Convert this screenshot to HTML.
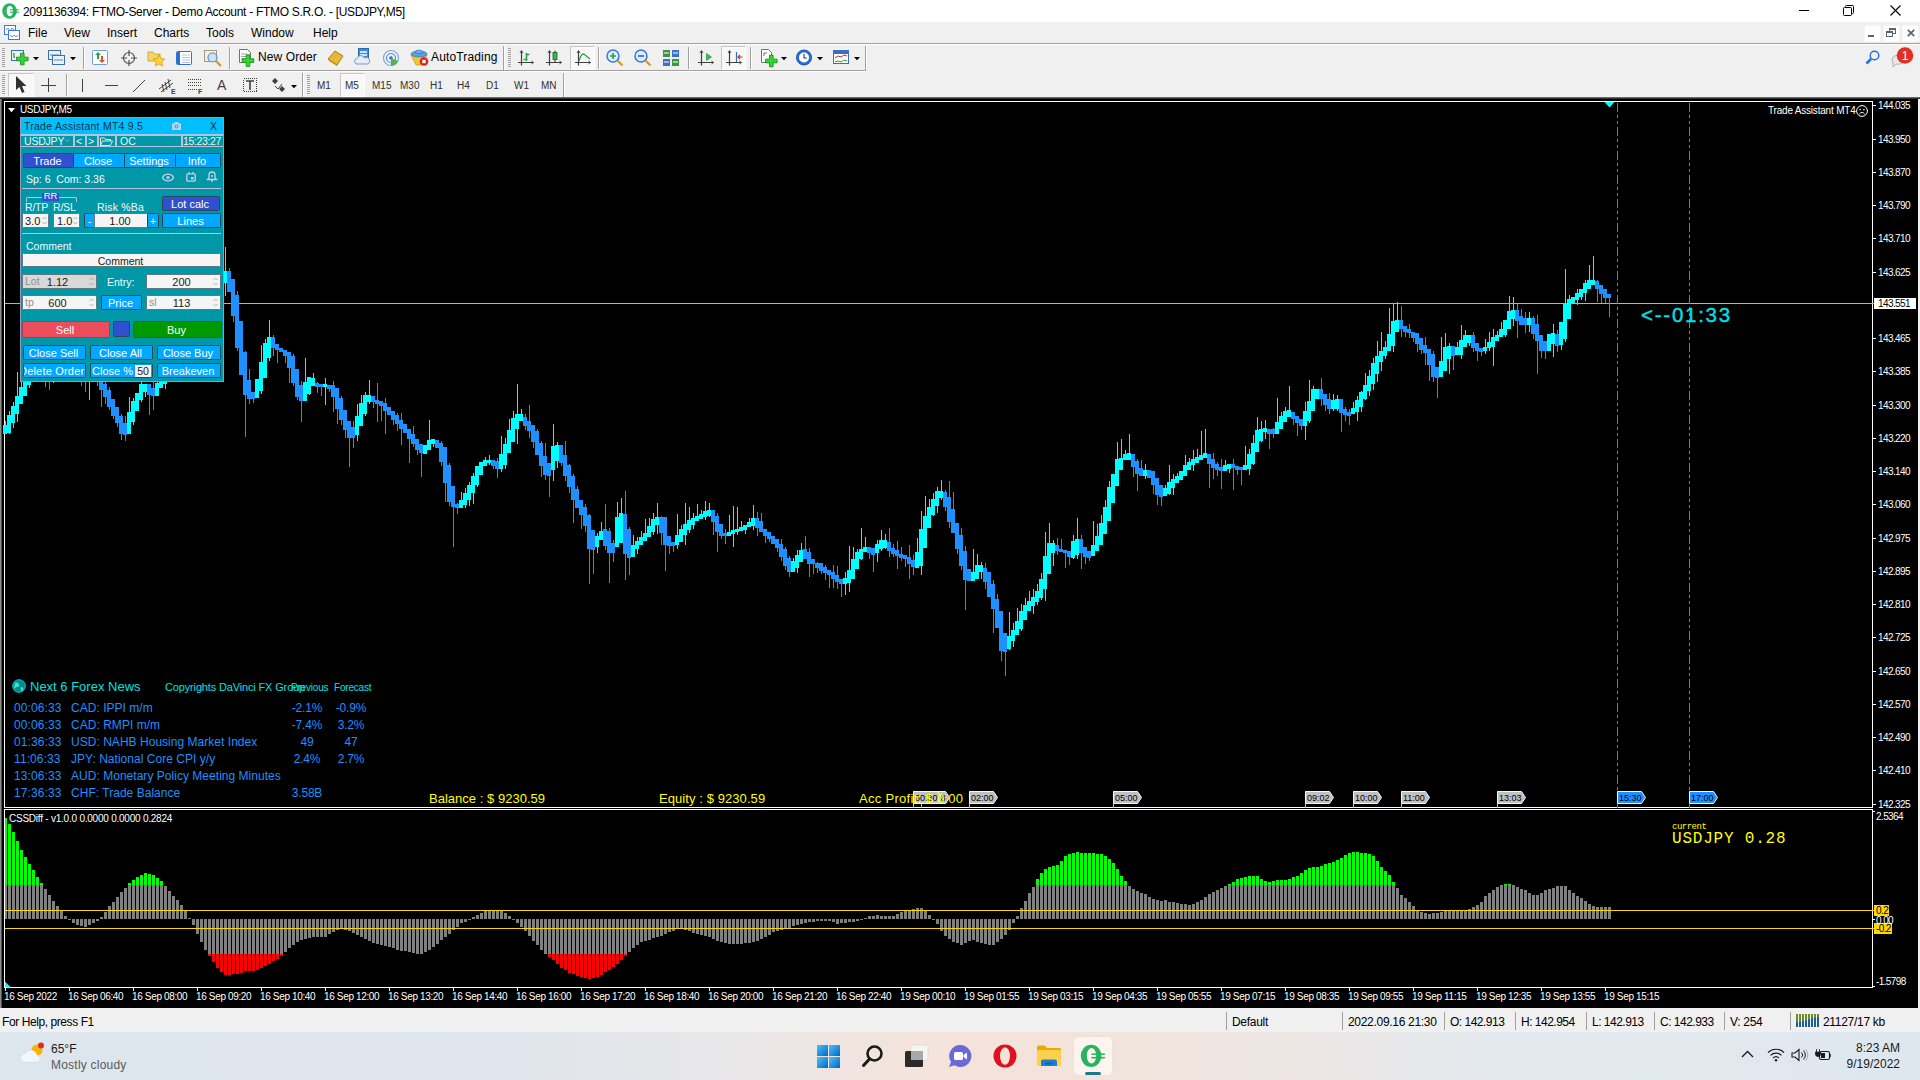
<!DOCTYPE html>
<html><head><meta charset="utf-8"><title>MT4</title><style>
*{margin:0;padding:0;box-sizing:border-box}
html,body{width:1920px;height:1080px;overflow:hidden;background:#f0f0f0;font-family:"Liberation Sans",sans-serif;}
.a{position:absolute}
.t{position:absolute;white-space:nowrap;line-height:1}
svg{position:absolute;overflow:visible}
</style></head>
<body>
<div class="a" style="left:0;top:0;width:1920px;height:22px;background:#fff"></div>
<svg style="left:2px;top:3px" width="18" height="18" viewBox="0 0 18 18"><ellipse cx="7.500" cy="8" rx="7.300" ry="7.800" fill="#27b35f"/><ellipse cx="7.800" cy="8" rx="3.200" ry="5.300" fill="#fff"/><rect x="7.800" y="6.300" width="9" height="1.100" fill="#27b35f"/><rect x="7.800" y="8.700" width="9" height="1.100" fill="#27b35f"/></svg>
<div class="t" style="left:23px;top:6px;font-size:12px;color:#000;letter-spacing:-0.3px">2091136394: FTMO-Server - Demo Account - FTMO S.R.O. - [USDJPY,M5]</div>
<div class="a" style="left:1799px;top:10px;width:10px;height:1px;background:#000"></div>
<svg style="left:1843px;top:5px" width="11" height="11"><rect x="0.5" y="2.5" width="8" height="8" fill="none" stroke="#000" rx="1"/><path d="M2.5 2.5v-1a1 1 0 0 1 1-1h6a1 1 0 0 1 1 1v6a1 1 0 0 1-1 1h-1" fill="none" stroke="#000"/></svg>
<svg style="left:1890px;top:5px" width="11" height="11"><path d="M0.5 0.5l10 10M10.5 0.5l-10 10" stroke="#000" stroke-width="1.1"/></svg>
<div class="a" style="left:0;top:22px;width:1920px;height:21px;background:#f0f0f0"></div>
<svg style="left:4px;top:24px" width="17" height="17" viewBox="0 0 17 17"><rect x="0.5" y="1.5" width="11" height="9" fill="#fff" stroke="#3a7bd5"/><rect x="4.5" y="6.5" width="11" height="9" fill="#fff" stroke="#3a7bd5"/><path d="M2 6l2-2 2 3 2-3 2 2" stroke="#3a7bd5" fill="none" stroke-width="0.8"/><path d="M6 11l2 2 2-2 2 2 2-2" stroke="#3a7bd5" fill="none" stroke-width="0.8"/></svg>
<div class="t" style="left:28px;top:27px;font-size:12px;color:#000;">File</div>
<div class="t" style="left:64px;top:27px;font-size:12px;color:#000;">View</div>
<div class="t" style="left:107px;top:27px;font-size:12px;color:#000;">Insert</div>
<div class="t" style="left:154px;top:27px;font-size:12px;color:#000;">Charts</div>
<div class="t" style="left:206px;top:27px;font-size:12px;color:#000;">Tools</div>
<div class="t" style="left:251px;top:27px;font-size:12px;color:#000;">Window</div>
<div class="t" style="left:313px;top:27px;font-size:12px;color:#000;">Help</div>
<div class="a" style="left:1864px;top:25px;width:17px;height:17px;background:#fff;border:1px solid #f4f4f4"></div>
<div class="a" style="left:1883px;top:25px;width:17px;height:17px;background:#fff;border:1px solid #f4f4f4"></div>
<div class="a" style="left:1902px;top:25px;width:17px;height:17px;background:#fff;border:1px solid #f4f4f4"></div>
<div class="a" style="left:1868px;top:35px;width:6px;height:2px;background:#5a6478"></div>
<svg style="left:1886px;top:28px" width="10" height="9"><rect x="3.5" y="0.5" width="6" height="5" fill="none" stroke="#5a6478"/><rect x="3" y="0" width="7" height="2" fill="#5a6478"/><rect x="0.5" y="3.5" width="6" height="5" fill="#fafafa" stroke="#5a6478"/><rect x="0" y="3" width="7" height="2" fill="#5a6478"/></svg>
<svg style="left:1907px;top:29px" width="8" height="8"><path d="M0.8 0.8l6.4 6.4M7.2 0.8l-6.4 6.4" stroke="#5a6478" stroke-width="1.8"/></svg>
<div class="a" style="left:0;top:43px;width:1920px;height:1px;background:#a0a0a0"></div>
<div class="a" style="left:0;top:44px;width:1920px;height:1px;background:#fff"></div>
<div class="a" style="left:0;top:70px;width:866px;height:1px;background:#a0a0a0"></div>
<div class="a" style="left:0;top:71px;width:866px;height:1px;background:#fff"></div>
<div class="a" style="left:2px;top:48px;width:3px;height:1px;background:#a0a0a0"></div><div class="a" style="left:2px;top:50px;width:3px;height:1px;background:#a0a0a0"></div><div class="a" style="left:2px;top:52px;width:3px;height:1px;background:#a0a0a0"></div><div class="a" style="left:2px;top:54px;width:3px;height:1px;background:#a0a0a0"></div><div class="a" style="left:2px;top:56px;width:3px;height:1px;background:#a0a0a0"></div><div class="a" style="left:2px;top:58px;width:3px;height:1px;background:#a0a0a0"></div><div class="a" style="left:2px;top:60px;width:3px;height:1px;background:#a0a0a0"></div><div class="a" style="left:2px;top:62px;width:3px;height:1px;background:#a0a0a0"></div><div class="a" style="left:2px;top:64px;width:3px;height:1px;background:#a0a0a0"></div><div class="a" style="left:2px;top:66px;width:3px;height:1px;background:#a0a0a0"></div>
<div class="a" style="left:2px;top:75px;width:3px;height:1px;background:#a0a0a0"></div><div class="a" style="left:2px;top:77px;width:3px;height:1px;background:#a0a0a0"></div><div class="a" style="left:2px;top:79px;width:3px;height:1px;background:#a0a0a0"></div><div class="a" style="left:2px;top:81px;width:3px;height:1px;background:#a0a0a0"></div><div class="a" style="left:2px;top:83px;width:3px;height:1px;background:#a0a0a0"></div><div class="a" style="left:2px;top:85px;width:3px;height:1px;background:#a0a0a0"></div><div class="a" style="left:2px;top:87px;width:3px;height:1px;background:#a0a0a0"></div><div class="a" style="left:2px;top:89px;width:3px;height:1px;background:#a0a0a0"></div><div class="a" style="left:2px;top:91px;width:3px;height:1px;background:#a0a0a0"></div><div class="a" style="left:2px;top:93px;width:3px;height:1px;background:#a0a0a0"></div>
<svg style="left:11px;top:48px" width="20" height="20" viewBox="0 0 20 20"><rect x="0.5" y="2.5" width="12" height="10" fill="#eaf2fb" stroke="#3a6fb5"/><path d="M3 5v5M2 6h1M3 9h1" stroke="#2e7d32" fill="none"/><path d="M5.500 9.200h4v-4h3.600v4h4v3.600h-4v4h-3.600v-4h-4z" fill="#33d633" stroke="#0f8a0f" stroke-width="0.8"/></svg>
<svg style="left:32.5px;top:56.5px" width="6" height="4"><path d="M0 0h6l-3 3.300z" fill="#000"/></svg>
<svg style="left:48px;top:48px" width="20" height="20" viewBox="0 0 20 20"><rect x="0.5" y="2.5" width="12" height="9" fill="#eaf2fb" stroke="#3a6fb5"/><rect x="4.5" y="7.5" width="12" height="9" fill="#eaf2fb" stroke="#3a6fb5"/><path d="M2 7h9M6 12h9" stroke="#3a6fb5" stroke-width="0.8"/></svg>
<svg style="left:69.5px;top:56.5px" width="6" height="4"><path d="M0 0h6l-3 3.300z" fill="#000"/></svg>
<div class="a" style="left:83px;top:47px;width:1px;height:22px;background:#a0a0a0"></div><div class="a" style="left:84px;top:47px;width:1px;height:22px;background:#fff"></div>
<svg style="left:91px;top:48px" width="20" height="20" viewBox="0 0 20 20"><rect x="1.5" y="2.5" width="15" height="14" fill="#fff" stroke="#6aa0e0" rx="1"/><path d="M6 11v-4h-2l3-3 3 3h-2v4z" fill="#2ea043"/><path d="M10 8v4h-2l3 3 3-3h-2v-4z" fill="#e05020"/></svg>
<svg style="left:120px;top:48px" width="20" height="20" viewBox="0 0 20 20"><circle cx="9" cy="10" r="5.5" fill="none" stroke="#505050" stroke-width="1.2"/><path d="M9 2v6M9 12v6M1 10h6M11 10h6" stroke="#505050" stroke-width="1.2"/></svg>
<svg style="left:147px;top:48px" width="20" height="20" viewBox="0 0 20 20"><path d="M1 4h5l1 2h6v7h-12z" fill="#f2d56b" stroke="#c8a020" stroke-width="0.8"/><path d="M12 8l1.8 3.6 4 .5-3 2.8.8 4-3.6-2-3.6 2 .8-4-3-2.8 4-.5z" fill="#ffd633" stroke="#d09a10" stroke-width="0.8" transform="translate(0,-1)"/></svg>
<svg style="left:175px;top:48px" width="20" height="20" viewBox="0 0 20 20"><rect x="1.5" y="3.5" width="15" height="13" fill="#fff" stroke="#2f6fd0" rx="1"/><rect x="2" y="4" width="3" height="12" fill="#2f6fd0"/><path d="M7 7h8M7 9.5h8M7 12h8M7 14.500h8" stroke="#9db8e0" stroke-width="0.8"/></svg>
<svg style="left:203px;top:48px" width="20" height="20" viewBox="0 0 20 20"><rect x="1.500" y="2.500" width="12" height="11" fill="#f4f0e4" stroke="#a09880"/><circle cx="9.500" cy="9.500" r="4.500" fill="#cfe3f8" stroke="#5c8fd0" stroke-width="1.200"/><path d="M13 13l5 5" stroke="#c89a30" stroke-width="2.200"/></svg>
<div class="a" style="left:229px;top:47px;width:1px;height:22px;background:#a0a0a0"></div><div class="a" style="left:230px;top:47px;width:1px;height:22px;background:#fff"></div>
<svg style="left:238px;top:48px" width="20" height="20" viewBox="0 0 20 20"><path d="M1.500 1.500h8l3 3v10h-11z" fill="#fff" stroke="#707070"/><path d="M3 6h6M3 8.500h6M3 11h4" stroke="#909090" stroke-width="0.8"/><path d="M4.200 10.800h4v-4h3.600v4h4v3.600h-4v4h-3.600v-4h-4z" fill="#33d633" stroke="#0f8a0f" stroke-width="0.8"/></svg>
<div class="t" style="left:258px;top:51px;font-size:12px;color:#000;letter-spacing:0.1px">New Order</div>
<svg style="left:326px;top:48px" width="20" height="20" viewBox="0 0 20 20"><path d="M2 11l7-8 8 5-6 9z" fill="#e8b838" stroke="#b07a10"/><path d="M2 11l1 2 8 5 0-1z" fill="#c89020"/></svg>
<svg style="left:353px;top:48px" width="20" height="20" viewBox="0 0 20 20"><rect x="5.500" y="0.500" width="10" height="10" fill="#3b8be0" stroke="#2a68b0"/><rect x="7" y="3" width="7" height="2" fill="#cfe3f8"/><rect x="7" y="6" width="7" height="2" fill="#cfe3f8"/><path d="M3 16a3 3 0 0 1 1-5.500 4 4 0 0 1 7.500-.5 3 3 0 0 1 3.500 6z" fill="#e8eef8" stroke="#7a98c0"/></svg>
<svg style="left:382px;top:48px" width="20" height="20" viewBox="0 0 20 20"><circle cx="9" cy="10" r="7.500" fill="none" stroke="#7aa8e0" stroke-width="1.200"/><circle cx="9" cy="10" r="4.500" fill="none" stroke="#5a90d8" stroke-width="1.200"/><circle cx="9" cy="10" r="1.800" fill="#3070c0"/><path d="M9 10v8a8 8 0 0 0 7-5z" fill="#4cb84c"/></svg>
<svg style="left:410px;top:48px" width="20" height="20" viewBox="0 0 20 20"><path d="M1 7h16l-5 10h-6z" fill="#f0c830" stroke="#c89a20" stroke-width="0.8"/><ellipse cx="9" cy="6" rx="8" ry="3" fill="#5aa0e0" stroke="#3a78c0" stroke-width="0.8"/><path d="M5 5a4 3 0 0 1 8 0z" fill="#7ab8f0" stroke="#3a78c0" stroke-width="0.8"/><circle cx="14" cy="13.500" r="4.300" fill="#e02020"/><rect x="12.300" y="11.800" width="3.400" height="3.400" fill="#fff"/></svg>
<div class="t" style="left:431px;top:51px;font-size:12px;color:#000;letter-spacing:0.15px">AutoTrading</div>
<div class="a" style="left:503px;top:46px;width:1px;height:24px;background:#a0a0a0"></div><div class="a" style="left:504px;top:46px;width:1px;height:24px;background:#fff"></div>
<div class="a" style="left:508px;top:48px;width:3px;height:1px;background:#a0a0a0"></div><div class="a" style="left:508px;top:50px;width:3px;height:1px;background:#a0a0a0"></div><div class="a" style="left:508px;top:52px;width:3px;height:1px;background:#a0a0a0"></div><div class="a" style="left:508px;top:54px;width:3px;height:1px;background:#a0a0a0"></div><div class="a" style="left:508px;top:56px;width:3px;height:1px;background:#a0a0a0"></div><div class="a" style="left:508px;top:58px;width:3px;height:1px;background:#a0a0a0"></div><div class="a" style="left:508px;top:60px;width:3px;height:1px;background:#a0a0a0"></div><div class="a" style="left:508px;top:62px;width:3px;height:1px;background:#a0a0a0"></div><div class="a" style="left:508px;top:64px;width:3px;height:1px;background:#a0a0a0"></div><div class="a" style="left:508px;top:66px;width:3px;height:1px;background:#a0a0a0"></div>
<svg style="left:517px;top:48px" width="20" height="20" viewBox="0 0 20 20"><path d="M4.500 3v14.500M1 14.500h15.500" stroke="#404040" stroke-width="1.200" fill="none"/><path d="M3 5l1.500-2.500 1.500 2.500M14.500 13l2 1.500-2 1.500" stroke="#404040" stroke-width="0.9" fill="none"/><path d="M9.500 5v8M9.500 6.500h3M6.500 11.500h3" stroke="#2ea043" stroke-width="1.600" fill="none"/></svg>
<svg style="left:545px;top:48px" width="20" height="20" viewBox="0 0 20 20"><path d="M4.500 3v14.500M1 14.500h15.500" stroke="#404040" stroke-width="1.200" fill="none"/><path d="M3 5l1.500-2.500 1.500 2.500M14.500 13l2 1.500-2 1.500" stroke="#404040" stroke-width="0.9" fill="none"/><path d="M10 2.500v11.500" stroke="#303030"/><rect x="8" y="4.500" width="4" height="7" fill="#2ec04a" stroke="#205a20" stroke-width="0.8"/></svg>
<div class="a" style="left:570px;top:46px;width:25px;height:24px;background:#f8f8f8;border:1px solid #c8c8c8;border-right-color:#fff;border-bottom-color:#fff"></div>
<svg style="left:574px;top:48px" width="20" height="20" viewBox="0 0 20 20"><path d="M4.500 3v14.500M1 14.500h15.500" stroke="#404040" stroke-width="1.200" fill="none"/><path d="M3 5l1.500-2.500 1.500 2.500M14.500 13l2 1.500-2 1.500" stroke="#404040" stroke-width="0.9" fill="none"/><path d="M5 13q2.500-9 5.500-6.500t5.500 4.500" stroke="#2ea043" fill="none" stroke-width="1.300"/></svg>
<div class="a" style="left:598px;top:47px;width:1px;height:22px;background:#a0a0a0"></div><div class="a" style="left:599px;top:47px;width:1px;height:22px;background:#fff"></div>
<svg style="left:605px;top:48px" width="20" height="20" viewBox="0 0 20 20"><circle cx="8" cy="8" r="6" fill="#d8ecff" stroke="#3a78d0" stroke-width="1.500"/><path d="M5 8h6M8 5v6" stroke="#2ea043" stroke-width="1.600"/><path d="M12.500 12.500l5 5" stroke="#d0a030" stroke-width="2.400"/></svg>
<svg style="left:633px;top:48px" width="20" height="20" viewBox="0 0 20 20"><circle cx="8" cy="8" r="6" fill="#d8ecff" stroke="#3a78d0" stroke-width="1.500"/><path d="M5 8h6" stroke="#3060c0" stroke-width="1.600"/><path d="M12.500 12.500l5 5" stroke="#d0a030" stroke-width="2.400"/></svg>
<svg style="left:662px;top:48px" width="20" height="20" viewBox="0 0 20 20"><rect x="1" y="2" width="7" height="7" fill="#3a9a3a"/><rect x="10" y="2" width="7" height="7" fill="#3a70d0"/><rect x="1" y="11" width="7" height="7" fill="#3a70d0"/><rect x="10" y="11" width="7" height="7" fill="#3a9a3a"/><path d="M2 5h5M11 5h5M2 14h5M11 14h5" stroke="#fff" stroke-width="1"/></svg>
<div class="a" style="left:688px;top:47px;width:1px;height:22px;background:#a0a0a0"></div><div class="a" style="left:689px;top:47px;width:1px;height:22px;background:#fff"></div>
<svg style="left:697px;top:48px" width="20" height="20" viewBox="0 0 20 20"><path d="M4.500 3v14.500M1 14.500h15.500" stroke="#404040" stroke-width="1.200" fill="none"/><path d="M3 5l1.500-2.500 1.500 2.500M14.500 13l2 1.500-2 1.500" stroke="#404040" stroke-width="0.9" fill="none"/><path d="M9.500 5.500l5 3.500-5 3.500z" fill="#2ec04a" stroke="#208a30" stroke-width="0.6"/></svg>
<div class="a" style="left:721px;top:46px;width:25px;height:24px;background:#f8f8f8;border:1px solid #c8c8c8;border-right-color:#fff;border-bottom-color:#fff"></div>
<svg style="left:725px;top:48px" width="20" height="20" viewBox="0 0 20 20"><path d="M4.500 3v14.500M1 14.500h15.500" stroke="#404040" stroke-width="1.200" fill="none"/><path d="M3 5l1.500-2.500 1.500 2.500M14.500 13l2 1.500-2 1.500" stroke="#404040" stroke-width="0.9" fill="none"/><path d="M11.500 4v10" stroke="#2a6fd8" stroke-width="1.200"/><path d="M17.500 9h-4M15 7l-2 2 2 2" stroke="#d03010" stroke-width="1.200" fill="none"/></svg>
<div class="a" style="left:750px;top:47px;width:1px;height:22px;background:#a0a0a0"></div><div class="a" style="left:751px;top:47px;width:1px;height:22px;background:#fff"></div>
<svg style="left:759px;top:48px" width="20" height="20" viewBox="0 0 20 20"><path d="M2.500 1.500h7l3 3v10h-10z" fill="#fff" stroke="#707070"/><path d="M5 8v-3h3" stroke="#707070" fill="none"/><path d="M6.500 11.200h4v-4h3.600v4h4v3.600h-4v4h-3.600v-4h-4z" fill="#33d633" stroke="#0f8a0f" stroke-width="0.8"/></svg>
<svg style="left:780.5px;top:56.5px" width="6" height="4"><path d="M0 0h6l-3 3.300z" fill="#000"/></svg>
<svg style="left:795px;top:48px" width="20" height="20" viewBox="0 0 20 20"><circle cx="9" cy="9.500" r="7.500" fill="#2a6fd8" stroke="#1a4fa8"/><circle cx="9" cy="9.500" r="5" fill="#fff"/><path d="M9 6v4h3" stroke="#404040" fill="none" stroke-width="1.200"/></svg>
<svg style="left:816.5px;top:56.5px" width="6" height="4"><path d="M0 0h6l-3 3.300z" fill="#000"/></svg>
<svg style="left:832px;top:48px" width="20" height="20" viewBox="0 0 20 20"><rect x="1.500" y="2.500" width="15" height="13" fill="#fff" stroke="#3a70c0"/><rect x="2" y="3" width="14" height="3" fill="#3a70c0"/><path d="M3 10l3-2 3 1 3-2 3 1" stroke="#c03020" fill="none"/><path d="M3 14l3-1 3 1 3-2 3 1" stroke="#2ea043" fill="none"/></svg>
<svg style="left:853.5px;top:56.5px" width="6" height="4"><path d="M0 0h6l-3 3.300z" fill="#000"/></svg>
<div class="a" style="left:865px;top:46px;width:1px;height:24px;background:#a0a0a0"></div><div class="a" style="left:866px;top:46px;width:1px;height:24px;background:#fff"></div>
<svg style="left:1863px;top:48px" width="20" height="20" viewBox="0 0 20 20"><circle cx="11.500" cy="7.500" r="4.300" fill="none" stroke="#2a6fd8" stroke-width="1.500"/><path d="M8 11l-4.500 4.500" stroke="#2a6fd8" stroke-width="2.600"/></svg>
<svg style="left:1889px;top:47px" width="24" height="24" viewBox="0 0 24 24"><path d="M3 13a6 4.500 0 1 1 4 4l-3 3v-4z" fill="#e8e8e8" stroke="#b0b0b0"/><circle cx="16" cy="8.500" r="8.300" fill="#e03020"/><text x="16" y="12.800" font-size="12" text-anchor="middle" fill="#fff" font-family="Liberation Sans">1</text></svg>
<div class="a" style="left:8px;top:73px;width:26px;height:24px;background:#f8f8f8;border:1px solid #c8c8c8;border-right-color:#fff;border-bottom-color:#fff"></div>
<svg style="left:13px;top:75px" width="20" height="20" viewBox="0 0 20 20"><path d="M3 1v14l3.500-3 2.500 6 2.500-1-2.500-6h4.500z" fill="#303030"/></svg>
<svg style="left:39px;top:75px" width="20" height="20" viewBox="0 0 20 20"><path d="M9.500 3v14M2 10.500h15" stroke="#404040" stroke-width="1"/></svg>
<div class="a" style="left:66px;top:74px;width:1px;height:22px;background:#a0a0a0"></div><div class="a" style="left:67px;top:74px;width:1px;height:22px;background:#fff"></div>
<svg style="left:73px;top:75px" width="20" height="20" viewBox="0 0 20 20"><path d="M9.500 4v13" stroke="#404040" stroke-width="1"/></svg>
<svg style="left:101px;top:75px" width="20" height="20" viewBox="0 0 20 20"><path d="M4 10.500h13" stroke="#404040" stroke-width="1"/></svg>
<svg style="left:129px;top:75px" width="20" height="20" viewBox="0 0 20 20"><path d="M4 17l12-12" stroke="#404040" stroke-width="1"/></svg>
<svg style="left:156px;top:75px" width="20" height="20" viewBox="0 0 20 20"><path d="M3 14l12-9M5 17l12-9M6 9l2 8M9 7l2 8M12 4l2 9" stroke="#404040" stroke-width="1" fill="none"/><text x="15" y="19" font-size="7" font-weight="bold" fill="#404040" font-family="Liberation Sans">E</text></svg>
<svg style="left:185px;top:75px" width="20" height="20" viewBox="0 0 20 20"><path d="M3 4.500h13M3 7.500h13M3 10.500h13M3 14.500h10" stroke="#404040" stroke-width="1" stroke-dasharray="1 1" fill="none" shape-rendering="crispEdges"/><text x="13" y="19" font-size="7" font-weight="bold" fill="#404040" font-family="Liberation Sans">F</text></svg>
<div class="t" style="left:217px;top:78px;font-size:14px;color:#404040;">A</div>
<svg style="left:241px;top:75px" width="20" height="20" viewBox="0 0 20 20"><rect x="2.500" y="3.500" width="13" height="13" fill="none" stroke="#404040" stroke-dasharray="1 1" shape-rendering="crispEdges"/><path d="M5 6h8M9 6v9" stroke="#404040" stroke-width="1.600" fill="none"/></svg>
<svg style="left:269px;top:75px" width="20" height="20" viewBox="0 0 20 20"><path d="M3 6l3-3 3 3-3 3zM10 14l3-3 3 3-3 3z" fill="#404040"/><path d="M6 11l3 3 4-5" stroke="#404040" fill="none"/></svg>
<svg style="left:290.5px;top:84.5px" width="6" height="4"><path d="M0 0h6l-3 3.300z" fill="#000"/></svg>
<div class="a" style="left:302px;top:73px;width:1px;height:24px;background:#a0a0a0"></div><div class="a" style="left:303px;top:73px;width:1px;height:24px;background:#fff"></div>
<div class="a" style="left:307px;top:75px;width:3px;height:1px;background:#a0a0a0"></div><div class="a" style="left:307px;top:77px;width:3px;height:1px;background:#a0a0a0"></div><div class="a" style="left:307px;top:79px;width:3px;height:1px;background:#a0a0a0"></div><div class="a" style="left:307px;top:81px;width:3px;height:1px;background:#a0a0a0"></div><div class="a" style="left:307px;top:83px;width:3px;height:1px;background:#a0a0a0"></div><div class="a" style="left:307px;top:85px;width:3px;height:1px;background:#a0a0a0"></div><div class="a" style="left:307px;top:87px;width:3px;height:1px;background:#a0a0a0"></div><div class="a" style="left:307px;top:89px;width:3px;height:1px;background:#a0a0a0"></div><div class="a" style="left:307px;top:91px;width:3px;height:1px;background:#a0a0a0"></div><div class="a" style="left:307px;top:93px;width:3px;height:1px;background:#a0a0a0"></div>
<div class="a" style="left:340px;top:73px;width:25px;height:24px;background:#f8f8f8;border:1px solid #c8c8c8;border-right-color:#fff;border-bottom-color:#fff"></div>
<div class="t" style="left:317px;top:81px;font-size:10px;color:#303030;">M1</div>
<div class="t" style="left:345px;top:81px;font-size:10px;color:#303030;">M5</div>
<div class="t" style="left:372px;top:81px;font-size:10px;color:#303030;">M15</div>
<div class="t" style="left:400px;top:81px;font-size:10px;color:#303030;">M30</div>
<div class="t" style="left:430px;top:81px;font-size:10px;color:#303030;">H1</div>
<div class="t" style="left:457px;top:81px;font-size:10px;color:#303030;">H4</div>
<div class="t" style="left:486px;top:81px;font-size:10px;color:#303030;">D1</div>
<div class="t" style="left:514px;top:81px;font-size:10px;color:#303030;">W1</div>
<div class="t" style="left:541px;top:81px;font-size:10px;color:#303030;">MN</div>
<div class="a" style="left:563px;top:73px;width:1px;height:24px;background:#a0a0a0"></div><div class="a" style="left:564px;top:73px;width:1px;height:24px;background:#fff"></div>
<div class="a" style="left:0px;top:97px;width:1920px;height:911px;background:#000"></div>
<div class="a" style="left:0px;top:97px;width:1920px;height:1px;background:#696969"></div>
<div class="a" style="left:0px;top:98px;width:1920px;height:1px;background:#303030"></div>
<div class="a" style="left:0px;top:99px;width:2px;height:909px;background:#8c8c8c"></div>
<div class="a" style="left:1px;top:99px;width:1px;height:909px;background:#505050"></div>
<div class="a" style="left:1918px;top:99px;width:2px;height:909px;background:#f0f0f0"></div>
<div class="a" style="left:4px;top:101px;width:1869px;height:1px;background:#fff"></div>
<div class="a" style="left:4px;top:807px;width:1869px;height:1px;background:#fff"></div>
<div class="a" style="left:4px;top:101px;width:1px;height:707px;background:#fff"></div>
<div class="a" style="left:1872px;top:101px;width:1px;height:707px;background:#fff"></div>
<div class="a" style="left:4px;top:809px;width:1869px;height:1px;background:#fff"></div>
<div class="a" style="left:4px;top:987px;width:1869px;height:1px;background:#fff"></div>
<div class="a" style="left:4px;top:809px;width:1px;height:179px;background:#fff"></div>
<div class="a" style="left:1872px;top:809px;width:1px;height:179px;background:#fff"></div>
<div class="a" style="left:1873px;top:105px;width:3px;height:1px;background:#fff"></div>
<div class="t" style="left:1878px;top:101px;font-size:10px;color:#fff;letter-spacing:-0.6px">144.035</div>
<div class="a" style="left:1873px;top:139px;width:3px;height:1px;background:#fff"></div>
<div class="t" style="left:1878px;top:135px;font-size:10px;color:#fff;letter-spacing:-0.6px">143.950</div>
<div class="a" style="left:1873px;top:172px;width:3px;height:1px;background:#fff"></div>
<div class="t" style="left:1878px;top:168px;font-size:10px;color:#fff;letter-spacing:-0.6px">143.870</div>
<div class="a" style="left:1873px;top:205px;width:3px;height:1px;background:#fff"></div>
<div class="t" style="left:1878px;top:201px;font-size:10px;color:#fff;letter-spacing:-0.6px">143.790</div>
<div class="a" style="left:1873px;top:238px;width:3px;height:1px;background:#fff"></div>
<div class="t" style="left:1878px;top:234px;font-size:10px;color:#fff;letter-spacing:-0.6px">143.710</div>
<div class="a" style="left:1873px;top:272px;width:3px;height:1px;background:#fff"></div>
<div class="t" style="left:1878px;top:268px;font-size:10px;color:#fff;letter-spacing:-0.6px">143.625</div>
<div class="a" style="left:1873px;top:338px;width:3px;height:1px;background:#fff"></div>
<div class="t" style="left:1878px;top:334px;font-size:10px;color:#fff;letter-spacing:-0.6px">143.465</div>
<div class="a" style="left:1873px;top:371px;width:3px;height:1px;background:#fff"></div>
<div class="t" style="left:1878px;top:367px;font-size:10px;color:#fff;letter-spacing:-0.6px">143.385</div>
<div class="a" style="left:1873px;top:405px;width:3px;height:1px;background:#fff"></div>
<div class="t" style="left:1878px;top:401px;font-size:10px;color:#fff;letter-spacing:-0.6px">143.300</div>
<div class="a" style="left:1873px;top:438px;width:3px;height:1px;background:#fff"></div>
<div class="t" style="left:1878px;top:434px;font-size:10px;color:#fff;letter-spacing:-0.6px">143.220</div>
<div class="a" style="left:1873px;top:471px;width:3px;height:1px;background:#fff"></div>
<div class="t" style="left:1878px;top:467px;font-size:10px;color:#fff;letter-spacing:-0.6px">143.140</div>
<div class="a" style="left:1873px;top:504px;width:3px;height:1px;background:#fff"></div>
<div class="t" style="left:1878px;top:500px;font-size:10px;color:#fff;letter-spacing:-0.6px">143.060</div>
<div class="a" style="left:1873px;top:538px;width:3px;height:1px;background:#fff"></div>
<div class="t" style="left:1878px;top:534px;font-size:10px;color:#fff;letter-spacing:-0.6px">142.975</div>
<div class="a" style="left:1873px;top:571px;width:3px;height:1px;background:#fff"></div>
<div class="t" style="left:1878px;top:567px;font-size:10px;color:#fff;letter-spacing:-0.6px">142.895</div>
<div class="a" style="left:1873px;top:604px;width:3px;height:1px;background:#fff"></div>
<div class="t" style="left:1878px;top:600px;font-size:10px;color:#fff;letter-spacing:-0.6px">142.810</div>
<div class="a" style="left:1873px;top:637px;width:3px;height:1px;background:#fff"></div>
<div class="t" style="left:1878px;top:633px;font-size:10px;color:#fff;letter-spacing:-0.6px">142.725</div>
<div class="a" style="left:1873px;top:671px;width:3px;height:1px;background:#fff"></div>
<div class="t" style="left:1878px;top:667px;font-size:10px;color:#fff;letter-spacing:-0.6px">142.650</div>
<div class="a" style="left:1873px;top:704px;width:3px;height:1px;background:#fff"></div>
<div class="t" style="left:1878px;top:700px;font-size:10px;color:#fff;letter-spacing:-0.6px">142.570</div>
<div class="a" style="left:1873px;top:737px;width:3px;height:1px;background:#fff"></div>
<div class="t" style="left:1878px;top:733px;font-size:10px;color:#fff;letter-spacing:-0.6px">142.490</div>
<div class="a" style="left:1873px;top:770px;width:3px;height:1px;background:#fff"></div>
<div class="t" style="left:1878px;top:766px;font-size:10px;color:#fff;letter-spacing:-0.6px">142.410</div>
<div class="a" style="left:1873px;top:804px;width:3px;height:1px;background:#fff"></div>
<div class="t" style="left:1878px;top:800px;font-size:10px;color:#fff;letter-spacing:-0.6px">142.325</div>
<div class="a" style="left:1874px;top:298px;width:42px;height:11px;background:#fff"></div>
<div class="t" style="left:1878px;top:299px;font-size:10px;color:#fff;letter-spacing:-0.6px;color:#000">143.551</div>
<div class="a" style="left:1873px;top:811px;width:2px;height:1px;background:#fff"></div>
<div class="t" style="left:1876px;top:812px;font-size:10px;color:#fff;letter-spacing:-0.6px">2.5364</div>
<div class="a" style="left:1873px;top:986px;width:2px;height:1px;background:#fff"></div>
<div class="t" style="left:1876px;top:977px;font-size:10px;color:#fff;letter-spacing:-0.6px">-1.5798</div>
<svg style="left:0;top:0" width="1920" height="1080" viewBox="0 0 1920 1080" shape-rendering="crispEdges"><rect x="5" y="303" width="1869" height="1" fill="#00ffff"/><path d="M1617.5 103V807" stroke="#1e90ff" stroke-width="1" stroke-dasharray="9 3 3 3 3 3" fill="none"/><path d="M1689.5 103V807" stroke="#1e90ff" stroke-width="1" stroke-dasharray="9 3 3 3 3 3" fill="none"/><path fill="#00ffff" d="M3 425h4v9h-4zM5 421h1v13h-1zM7 415h4v18h-4zM9 411h1v23h-1zM11 406h4v17h-4zM13 402h1v26h-1zM15 396h4v18h-4zM17 372h1v50h-1zM19 387h4v17h-4zM21 381h1v23h-1zM23 379h4v17h-4zM25 372h1v24h-1zM27 373h4v12h-4zM29 362h1v26h-1zM31 367h4v11h-4zM33 353h1v25h-1zM35 363h4v9h-4zM37 346h1v26h-1zM51 370h4v8h-4zM53 347h1v36h-1zM55 368h4v7h-4zM57 344h1v31h-1zM59 367h4v4h-4zM61 364h1v8h-1zM87 375h4v7h-4zM89 358h1v42h-1zM91 372h4v8h-4zM93 362h1v19h-1zM127 412h4v22h-4zM129 397h1v37h-1zM131 401h4v21h-4zM133 398h1v27h-1zM135 393h4v18h-4zM139 384h4v16h-4zM141 379h1v23h-1zM143 384h4v8h-4zM145 384h1v13h-1zM155 383h4v13h-4zM157 360h1v36h-1zM159 380h4v8h-4zM161 361h1v27h-1zM163 374h4v10h-4zM165 374h1v15h-1zM167 368h4v11h-4zM171 361h4v13h-4zM173 346h1v30h-1zM175 354h4v14h-4zM177 348h1v21h-1zM179 345h4v16h-4zM181 336h1v25h-1zM183 337h4v16h-4zM185 329h1v24h-1zM187 330h4v15h-4zM189 327h1v18h-1zM191 322h4v15h-4zM193 313h1v28h-1zM195 313h4v16h-4zM197 304h1v27h-1zM199 305h4v16h-4zM201 292h1v29h-1zM203 300h4v13h-4zM205 292h1v21h-1zM207 295h4v10h-4zM209 272h1v33h-1zM211 289h4v11h-4zM213 280h1v20h-1zM215 284h4v10h-4zM217 277h1v19h-1zM219 276h4v13h-4zM221 257h1v39h-1zM223 271h4v12h-4zM225 247h1v49h-1zM255 379h4v19h-4zM259 362h4v29h-4zM261 345h1v49h-1zM263 343h4v35h-4zM265 339h1v39h-1zM267 337h4v21h-4zM269 320h1v41h-1zM303 382h4v19h-4zM305 358h1v43h-1zM307 377h4v17h-4zM309 377h1v18h-1zM311 378h4v8h-4zM313 373h1v13h-1zM323 384h4v3h-4zM325 378h1v27h-1zM355 416h4v19h-4zM357 404h1v37h-1zM359 403h4v23h-4zM361 395h1v31h-1zM363 395h4v19h-4zM365 392h1v24h-1zM367 395h4v7h-4zM369 380h1v24h-1zM423 445h4v9h-4zM427 440h4v10h-4zM429 420h1v30h-1zM431 439h4v5h-4zM433 439h1v8h-1zM459 500h4v8h-4zM461 492h1v16h-1zM463 493h4v12h-4zM465 488h1v20h-1zM467 485h4v15h-4zM469 482h1v24h-1zM471 476h4v17h-4zM473 473h1v31h-1zM475 466h4v19h-4zM477 466h1v21h-1zM479 462h4v13h-4zM483 460h4v6h-4zM485 457h1v9h-1zM487 460h4v3h-4zM489 455h1v10h-1zM499 454h4v15h-4zM501 436h1v36h-1zM503 444h4v21h-4zM505 438h1v31h-1zM507 430h4v23h-4zM509 419h1v34h-1zM511 418h4v24h-4zM513 411h1v31h-1zM515 414h4v15h-4zM517 384h1v60h-1zM519 414h4v7h-4zM521 409h1v12h-1zM551 446h4v24h-4zM553 424h1v57h-1zM555 445h4v16h-4zM557 442h1v26h-1zM595 536h4v11h-4zM597 533h1v20h-1zM599 531h4v9h-4zM601 522h1v18h-1zM615 517h4v30h-4zM617 502h1v45h-1zM619 513h4v30h-4zM621 498h1v45h-1zM631 545h4v12h-4zM633 535h1v22h-1zM635 541h4v8h-4zM637 537h1v17h-1zM639 537h4v8h-4zM641 531h1v14h-1zM643 533h4v8h-4zM645 519h1v22h-1zM647 526h4v11h-4zM649 518h1v19h-1zM651 519h4v13h-4zM653 513h1v22h-1zM655 517h4v8h-4zM657 503h1v31h-1zM675 535h4v10h-4zM677 514h1v35h-1zM679 529h4v13h-4zM681 525h1v17h-1zM683 524h4v11h-4zM685 503h1v42h-1zM687 520h4v10h-4zM689 507h1v26h-1zM691 518h4v7h-4zM693 513h1v16h-1zM695 516h4v5h-4zM697 504h1v17h-1zM699 514h4v5h-4zM701 510h1v9h-1zM703 511h4v6h-4zM705 501h1v19h-1zM707 510h4v6h-4zM709 503h1v14h-1zM727 532h4v4h-4zM729 515h1v21h-1zM731 530h4v4h-4zM733 506h1v41h-1zM735 529h4v3h-4zM737 507h1v28h-1zM739 527h4v4h-4zM741 521h1v10h-1zM743 525h4v5h-4zM745 525h1v9h-1zM747 522h4v5h-4zM749 518h1v9h-1zM751 518h4v8h-4zM753 505h1v25h-1zM791 561h4v11h-4zM793 558h1v14h-1zM795 555h4v13h-4zM797 550h1v23h-1zM799 550h4v12h-4zM801 543h1v19h-1zM843 578h4v6h-4zM845 572h1v23h-1zM847 570h4v13h-4zM849 546h1v46h-1zM851 559h4v20h-4zM853 547h1v32h-1zM855 552h4v17h-4zM857 549h1v20h-1zM859 549h4v10h-4zM861 528h1v32h-1zM863 547h4v5h-4zM865 537h1v15h-1zM875 544h4v9h-4zM877 540h1v22h-1zM879 540h4v9h-4zM881 530h1v21h-1zM883 540h4v8h-4zM885 534h1v15h-1zM915 552h4v16h-4zM917 538h1v30h-1zM919 529h4v37h-4zM921 511h1v64h-1zM923 516h4v32h-4zM925 496h1v52h-1zM927 507h4v21h-4zM929 499h1v29h-1zM931 499h4v16h-4zM933 493h1v23h-1zM935 491h4v15h-4zM937 487h1v26h-1zM939 491h4v7h-4zM941 480h1v20h-1zM971 572h4v9h-4zM973 549h1v32h-1zM975 565h4v14h-4zM977 554h1v25h-1zM979 565h4v7h-4zM981 562h1v17h-1zM1007 636h4v13h-4zM1009 612h1v38h-1zM1011 630h4v11h-4zM1013 623h1v24h-1zM1015 621h4v14h-4zM1017 608h1v27h-1zM1019 611h4v18h-4zM1021 604h1v27h-1zM1023 605h4v15h-4zM1025 598h1v22h-1zM1027 601h4v10h-4zM1029 591h1v20h-1zM1031 597h4v9h-4zM1033 589h1v25h-1zM1035 591h4v11h-4zM1037 584h1v21h-1zM1039 579h4v19h-4zM1041 573h1v27h-1zM1043 556h4v33h-4zM1045 532h1v69h-1zM1047 543h4v31h-4zM1049 523h1v51h-1zM1051 543h4v10h-4zM1053 540h1v26h-1zM1071 541h4v17h-4zM1073 535h1v24h-1zM1075 539h4v16h-4zM1077 518h1v41h-1zM1091 545h4v11h-4zM1093 521h1v35h-1zM1095 536h4v15h-4zM1097 524h1v27h-1zM1099 523h4v22h-4zM1101 515h1v30h-1zM1103 507h4v27h-4zM1105 500h1v34h-1zM1107 487h4v34h-4zM1109 481h1v40h-1zM1111 474h4v29h-4zM1115 459h4v27h-4zM1117 442h1v44h-1zM1119 458h4v12h-4zM1121 439h1v31h-1zM1123 454h4v6h-4zM1125 450h1v10h-1zM1127 453h4v7h-4zM1129 434h1v26h-1zM1143 470h4v6h-4zM1145 464h1v15h-1zM1163 488h4v8h-4zM1165 485h1v11h-1zM1167 482h4v12h-4zM1169 465h1v30h-1zM1171 479h4v9h-4zM1173 474h1v21h-1zM1175 476h4v7h-4zM1177 473h1v10h-1zM1179 471h4v9h-4zM1183 465h4v11h-4zM1185 455h1v21h-1zM1187 462h4v8h-4zM1189 458h1v12h-1zM1191 459h4v6h-4zM1193 450h1v21h-1zM1195 457h4v6h-4zM1197 449h1v14h-1zM1199 455h4v5h-4zM1201 431h1v29h-1zM1203 453h4v5h-4zM1205 429h1v29h-1zM1223 465h4v6h-4zM1225 460h1v11h-1zM1227 464h4v5h-4zM1229 464h1v9h-1zM1243 465h4v5h-4zM1245 446h1v24h-1zM1247 454h4v15h-4zM1249 449h1v26h-1zM1251 443h4v21h-4zM1253 435h1v30h-1zM1255 430h4v22h-4zM1257 417h1v35h-1zM1259 429h4v12h-4zM1261 421h1v21h-1zM1263 428h4v4h-4zM1265 420h1v19h-1zM1275 422h4v12h-4zM1277 398h1v36h-1zM1279 416h4v13h-4zM1281 412h1v17h-1zM1283 411h4v11h-4zM1285 407h1v15h-1zM1287 410h4v7h-4zM1289 386h1v31h-1zM1303 411h4v15h-4zM1305 402h1v38h-1zM1307 401h4v20h-4zM1309 380h1v43h-1zM1311 389h4v22h-4zM1313 386h1v25h-1zM1315 389h4v10h-4zM1331 400h4v9h-4zM1333 394h1v17h-1zM1335 399h4v10h-4zM1337 395h1v16h-1zM1351 408h4v6h-4zM1353 402h1v12h-1zM1355 400h4v12h-4zM1357 396h1v25h-1zM1359 392h4v15h-4zM1361 391h1v21h-1zM1363 385h4v14h-4zM1365 373h1v27h-1zM1367 376h4v15h-4zM1369 370h1v26h-1zM1371 363h4v21h-4zM1373 358h1v32h-1zM1375 356h4v18h-4zM1377 341h1v41h-1zM1379 351h4v11h-4zM1381 332h1v39h-1zM1383 347h4v9h-4zM1385 341h1v18h-1zM1387 334h4v17h-4zM1389 308h1v43h-1zM1391 321h4v25h-4zM1393 304h1v48h-1zM1395 320h4v12h-4zM1397 302h1v30h-1zM1439 361h4v16h-4zM1441 337h1v40h-1zM1443 347h4v24h-4zM1445 333h1v38h-1zM1447 346h4v13h-4zM1449 343h1v31h-1zM1455 347h4v8h-4zM1457 342h1v13h-1zM1459 340h4v15h-4zM1461 325h1v34h-1zM1463 335h4v12h-4zM1465 330h1v17h-1zM1467 335h4v8h-4zM1469 335h1v11h-1zM1483 347h4v4h-4zM1485 339h1v15h-1zM1487 342h4v6h-4zM1489 332h1v19h-1zM1491 337h4v10h-4zM1493 329h1v37h-1zM1495 335h4v6h-4zM1497 331h1v10h-1zM1499 329h4v8h-4zM1501 322h1v15h-1zM1503 320h4v15h-4zM1505 320h1v17h-1zM1507 311h4v18h-4zM1509 296h1v33h-1zM1511 310h4v9h-4zM1513 297h1v29h-1zM1527 318h4v7h-4zM1529 312h1v20h-1zM1547 334h4v17h-4zM1551 333h4v11h-4zM1553 324h1v33h-1zM1559 322h4v23h-4zM1561 322h1v28h-1zM1563 303h4v36h-4zM1565 269h1v73h-1zM1567 299h4v20h-4zM1569 295h1v24h-1zM1571 297h4v6h-4zM1573 297h1v7h-1zM1575 293h4v7h-4zM1577 289h1v16h-1zM1579 289h4v8h-4zM1581 289h1v11h-1zM1583 283h4v10h-4zM1585 280h1v21h-1zM1587 280h4v9h-4zM1589 265h1v24h-1zM1591 280h4v5h-4zM1593 256h1v29h-1z"/><path fill="#1e90ff" d="M39 363h4v8h-4zM41 363h1v15h-1zM43 365h4v11h-4zM45 365h1v22h-1zM47 370h4v8h-4zM49 370h1v20h-1zM63 368h4v3h-4zM65 365h1v10h-1zM67 368h4v3h-4zM69 368h1v12h-1zM71 370h4v4h-4zM73 360h1v21h-1zM75 371h4v5h-4zM77 367h1v14h-1zM79 373h4v6h-4zM81 369h1v17h-1zM83 376h4v6h-4zM85 376h1v16h-1zM95 372h4v10h-4zM97 370h1v16h-1zM99 376h4v14h-4zM101 376h1v31h-1zM103 384h4v13h-4zM105 375h1v29h-1zM107 390h4v17h-4zM109 387h1v23h-1zM111 399h4v17h-4zM113 399h1v20h-1zM115 407h4v16h-4zM117 407h1v20h-1zM119 416h4v18h-4zM121 414h1v26h-1zM123 423h4v12h-4zM125 416h1v25h-1zM147 384h4v11h-4zM149 384h1v31h-1zM151 388h4v8h-4zM153 381h1v29h-1zM227 271h4v21h-4zM229 268h1v24h-1zM231 279h4v37h-4zM233 279h1v43h-1zM235 295h4v53h-4zM237 291h1v60h-1zM239 321h4v54h-4zM243 352h4v43h-4zM245 351h1v86h-1zM247 380h4v19h-4zM249 369h1v35h-1zM251 392h4v7h-4zM253 392h1v11h-1zM271 337h4v11h-4zM273 335h1v21h-1zM275 344h4v6h-4zM277 344h1v19h-1zM279 348h4v4h-4zM283 350h4v6h-4zM285 350h1v13h-1zM287 352h4v16h-4zM289 352h1v31h-1zM291 356h4v27h-4zM293 354h1v32h-1zM295 369h4v28h-4zM297 369h1v31h-1zM299 385h4v16h-4zM301 381h1v41h-1zM315 383h4v4h-4zM317 382h1v11h-1zM319 384h4v3h-4zM321 384h1v12h-1zM327 385h4v4h-4zM329 385h1v7h-1zM331 385h4v12h-4zM333 381h1v31h-1zM335 388h4v21h-4zM337 388h1v36h-1zM339 398h4v22h-4zM341 396h1v29h-1zM343 410h4v20h-4zM345 410h1v28h-1zM347 421h4v17h-4zM349 421h1v46h-1zM351 427h4v11h-4zM353 421h1v27h-1zM371 396h4v6h-4zM373 396h1v12h-1zM375 400h4v4h-4zM377 383h1v39h-1zM379 401h4v5h-4zM381 401h1v20h-1zM383 403h4v8h-4zM385 398h1v36h-1zM387 407h4v8h-4zM391 411h4v9h-4zM393 411h1v14h-1zM395 415h4v9h-4zM397 413h1v18h-1zM399 420h4v9h-4zM401 413h1v32h-1zM403 424h4v9h-4zM407 429h4v10h-4zM409 429h1v34h-1zM411 434h4v10h-4zM413 426h1v21h-1zM415 439h4v11h-4zM417 439h1v16h-1zM419 444h4v9h-4zM421 444h1v33h-1zM435 440h4v8h-4zM439 443h4v19h-4zM441 441h1v25h-1zM443 447h4v36h-4zM445 447h1v55h-1zM447 465h4v37h-4zM449 463h1v43h-1zM451 486h4v21h-4zM453 486h1v61h-1zM455 504h4v4h-4zM457 503h1v11h-1zM491 460h4v6h-4zM493 460h1v9h-1zM495 461h4v8h-4zM497 458h1v20h-1zM523 417h4v9h-4zM525 414h1v16h-1zM527 421h4v10h-4zM529 405h1v33h-1zM531 425h4v17h-4zM533 425h1v23h-1zM535 431h4v24h-4zM537 429h1v26h-1zM539 443h4v23h-4zM541 441h1v36h-1zM543 456h4v19h-4zM545 443h1v37h-1zM547 463h4v13h-4zM549 463h1v34h-1zM559 445h4v18h-4zM561 445h1v21h-1zM563 455h4v21h-4zM565 441h1v40h-1zM567 465h4v22h-4zM569 464h1v29h-1zM571 476h4v24h-4zM573 474h1v49h-1zM575 489h4v19h-4zM577 486h1v22h-1zM579 500h4v15h-4zM581 500h1v29h-1zM583 507h4v19h-4zM585 504h1v28h-1zM587 515h4v34h-4zM589 514h1v70h-1zM591 530h4v20h-4zM593 530h1v44h-1zM603 529h4v17h-4zM605 504h1v46h-1zM607 531h4v22h-4zM609 528h1v55h-1zM611 543h4v10h-4zM613 540h1v22h-1zM623 514h4v40h-4zM625 491h1v89h-1zM627 529h4v29h-4zM629 527h1v48h-1zM659 517h4v16h-4zM661 516h1v29h-1zM663 517h4v28h-4zM665 517h1v54h-1zM667 536h4v10h-4zM669 536h1v18h-1zM671 542h4v4h-4zM673 542h1v10h-1zM711 510h4v12h-4zM713 510h1v25h-1zM715 516h4v16h-4zM717 513h1v39h-1zM719 524h4v12h-4zM721 524h1v15h-1zM723 533h4v3h-4zM725 529h1v15h-1zM755 518h4v10h-4zM757 512h1v24h-1zM759 521h4v11h-4zM761 513h1v19h-1zM763 529h4v7h-4zM765 529h1v14h-1zM767 532h4v7h-4zM769 532h1v10h-1zM771 536h4v8h-4zM775 539h4v9h-4zM777 539h1v13h-1zM779 544h4v13h-4zM781 539h1v22h-1zM783 549h4v17h-4zM785 547h1v23h-1zM787 558h4v14h-4zM789 556h1v21h-1zM803 549h4v10h-4zM805 536h1v23h-1zM807 552h4v12h-4zM809 548h1v29h-1zM811 559h4v5h-4zM813 559h1v15h-1zM815 563h4v5h-4zM817 562h1v11h-1zM819 563h4v8h-4zM821 563h1v11h-1zM823 567h4v6h-4zM825 565h1v15h-1zM827 570h4v5h-4zM829 570h1v18h-1zM831 572h4v7h-4zM833 565h1v23h-1zM835 575h4v7h-4zM837 566h1v23h-1zM839 579h4v5h-4zM841 579h1v18h-1zM867 547h4v6h-4zM869 547h1v12h-1zM871 548h4v7h-4zM873 548h1v24h-1zM887 542h4v9h-4zM889 528h1v29h-1zM891 548h4v6h-4zM893 544h1v13h-1zM895 550h4v6h-4zM897 541h1v28h-1zM899 554h4v4h-4zM901 547h1v14h-1zM903 555h4v4h-4zM905 555h1v12h-1zM907 557h4v7h-4zM909 545h1v34h-1zM911 560h4v7h-4zM913 555h1v20h-1zM943 492h4v15h-4zM945 490h1v21h-1zM947 497h4v25h-4zM949 481h1v47h-1zM951 509h4v24h-4zM953 492h1v41h-1zM955 523h4v26h-4zM957 523h1v31h-1zM959 535h4v31h-4zM961 528h1v42h-1zM963 551h4v29h-4zM965 546h1v64h-1zM967 569h4v12h-4zM983 568h4v14h-4zM985 563h1v26h-1zM987 572h4v25h-4zM991 584h4v25h-4zM993 580h1v53h-1zM995 599h4v29h-4zM997 594h1v34h-1zM999 611h4v40h-4zM1001 611h1v50h-1zM1003 633h4v19h-4zM1005 633h1v43h-1zM1055 545h4v6h-4zM1057 538h1v17h-1zM1059 549h4v3h-4zM1061 539h1v13h-1zM1063 550h4v3h-4zM1065 550h1v18h-1zM1067 551h4v6h-4zM1069 551h1v14h-1zM1079 539h4v14h-4zM1081 535h1v34h-1zM1083 547h4v10h-4zM1085 547h1v17h-1zM1087 551h4v7h-4zM1089 551h1v10h-1zM1131 454h4v13h-4zM1133 454h1v23h-1zM1135 461h4v13h-4zM1137 459h1v32h-1zM1139 468h4v8h-4zM1141 460h1v16h-1zM1147 470h4v8h-4zM1151 471h4v14h-4zM1153 471h1v23h-1zM1155 478h4v17h-4zM1157 478h1v27h-1zM1159 485h4v12h-4zM1161 485h1v21h-1zM1207 454h4v10h-4zM1209 454h1v34h-1zM1211 459h4v9h-4zM1213 453h1v26h-1zM1215 464h4v6h-4zM1217 462h1v14h-1zM1219 467h4v4h-4zM1221 459h1v30h-1zM1231 464h4v4h-4zM1233 459h1v31h-1zM1235 466h4v4h-4zM1237 466h1v9h-1zM1239 467h4v3h-4zM1241 467h1v18h-1zM1267 429h4v5h-4zM1269 429h1v20h-1zM1271 429h4v5h-4zM1273 428h1v10h-1zM1291 412h4v7h-4zM1293 412h1v13h-1zM1295 416h4v7h-4zM1297 416h1v20h-1zM1299 419h4v7h-4zM1301 419h1v11h-1zM1319 389h4v10h-4zM1321 378h1v28h-1zM1323 394h4v11h-4zM1325 394h1v17h-1zM1327 399h4v10h-4zM1329 393h1v21h-1zM1339 399h4v14h-4zM1341 399h1v33h-1zM1343 409h4v6h-4zM1345 407h1v14h-1zM1347 412h4v4h-4zM1349 409h1v16h-1zM1399 320h4v9h-4zM1401 306h1v31h-1zM1403 326h4v6h-4zM1405 326h1v11h-1zM1407 329h4v4h-4zM1409 324h1v14h-1zM1411 332h4v6h-4zM1413 332h1v10h-1zM1415 333h4v11h-4zM1417 333h1v19h-1zM1419 338h4v12h-4zM1421 338h1v16h-1zM1423 345h4v8h-4zM1425 337h1v28h-1zM1427 349h4v16h-4zM1429 349h1v32h-1zM1431 354h4v23h-4zM1433 351h1v31h-1zM1435 367h4v11h-4zM1437 367h1v31h-1zM1451 346h4v10h-4zM1453 346h1v24h-1zM1471 335h4v13h-4zM1473 332h1v20h-1zM1475 343h4v8h-4zM1477 343h1v18h-1zM1479 348h4v4h-4zM1481 348h1v8h-1zM1515 310h4v11h-4zM1517 304h1v34h-1zM1519 316h4v9h-4zM1521 309h1v16h-1zM1523 318h4v7h-4zM1525 312h1v21h-1zM1531 318h4v16h-4zM1533 316h1v23h-1zM1535 324h4v17h-4zM1537 315h1v59h-1zM1539 335h4v16h-4zM1541 335h1v23h-1zM1543 341h4v10h-4zM1545 341h1v18h-1zM1555 334h4v12h-4zM1557 330h1v22h-1zM1595 281h4v8h-4zM1597 280h1v22h-1zM1599 285h4v9h-4zM1601 285h1v18h-1zM1603 289h4v9h-4zM1605 289h1v14h-1zM1607 294h4v4h-4zM1609 294h1v23h-1z"/><path d="M1604.5 102h10l-5 5.5z" fill="#00ffff" shape-rendering="auto"/><path fill="#808080" d="M5 885h2v34h-2zM8 885h3v34h-3zM12 885h3v34h-3zM16 885h3v34h-3zM20 885h3v34h-3zM24 885h3v34h-3zM28 885h3v34h-3zM32 885h3v34h-3zM36 885h3v34h-3zM40 885h3v34h-3zM44 889h3v30h-3zM48 895h3v24h-3zM52 901h3v18h-3zM56 906h3v13h-3zM60 911h3v8h-3zM64 916h3v3h-3zM68 919h3v1h-3zM72 919h3v4h-3zM76 919h3v6h-3zM80 919h3v7h-3zM84 919h3v8h-3zM88 919h3v6h-3zM92 919h3v4h-3zM96 919h3v2h-3zM100 917h3v2h-3zM104 912h3v7h-3zM108 906h3v13h-3zM112 902h3v17h-3zM116 897h3v22h-3zM120 892h3v27h-3zM124 888h3v31h-3zM128 885h3v34h-3zM132 885h3v34h-3zM136 885h3v34h-3zM140 885h3v34h-3zM144 885h3v34h-3zM148 885h3v34h-3zM152 885h3v34h-3zM156 885h3v34h-3zM160 885h3v34h-3zM164 886h3v33h-3zM168 891h3v28h-3zM172 896h3v23h-3zM176 900h3v19h-3zM180 905h3v14h-3zM184 911h3v8h-3zM188 918h3v1h-3zM192 919h3v6h-3zM196 919h3v15h-3zM200 919h3v23h-3zM204 919h3v31h-3zM208 919h3v35h-3zM212 919h3v35h-3zM216 919h3v35h-3zM220 919h3v35h-3zM224 919h3v35h-3zM228 919h3v35h-3zM232 919h3v35h-3zM236 919h3v35h-3zM240 919h3v35h-3zM244 919h3v35h-3zM248 919h3v35h-3zM252 919h3v35h-3zM256 919h3v35h-3zM260 919h3v35h-3zM264 919h3v35h-3zM268 919h3v35h-3zM272 919h3v35h-3zM276 919h3v35h-3zM280 919h3v35h-3zM284 919h3v33h-3zM288 919h3v29h-3zM292 919h3v26h-3zM296 919h3v23h-3zM300 919h3v21h-3zM304 919h3v20h-3zM308 919h3v19h-3zM312 919h3v18h-3zM316 919h3v18h-3zM320 919h3v18h-3zM324 919h3v18h-3zM328 919h3v15h-3zM332 919h3v13h-3zM336 919h3v11h-3zM340 919h3v10h-3zM344 919h3v11h-3zM348 919h3v12h-3zM352 919h3v14h-3zM356 919h3v16h-3zM360 919h3v18h-3zM364 919h3v20h-3zM368 919h3v22h-3zM372 919h3v24h-3zM376 919h3v25h-3zM380 919h3v26h-3zM384 919h3v27h-3zM388 919h3v28h-3zM392 919h3v29h-3zM396 919h3v31h-3zM400 919h3v32h-3zM404 919h3v32h-3zM408 919h3v33h-3zM412 919h3v34h-3zM416 919h3v35h-3zM420 919h3v35h-3zM424 919h3v33h-3zM428 919h3v31h-3zM432 919h3v28h-3zM436 919h3v25h-3zM440 919h3v21h-3zM444 919h3v18h-3zM448 919h3v15h-3zM452 919h3v11h-3zM456 919h3v8h-3zM460 919h3v4h-3zM464 919h3v3h-3zM468 919h3v1h-3zM472 917h3v2h-3zM476 915h3v4h-3zM480 913h3v6h-3zM484 911h3v8h-3zM488 911h3v8h-3zM492 911h3v8h-3zM496 911h3v8h-3zM500 911h3v8h-3zM504 913h3v6h-3zM508 916h3v3h-3zM512 919h3v1h-3zM516 919h3v4h-3zM520 919h3v8h-3zM524 919h3v12h-3zM528 919h3v17h-3zM532 919h3v22h-3zM536 919h3v26h-3zM540 919h3v31h-3zM544 919h3v35h-3zM548 919h3v35h-3zM552 919h3v35h-3zM556 919h3v35h-3zM560 919h3v35h-3zM564 919h3v35h-3zM568 919h3v35h-3zM572 919h3v35h-3zM576 919h3v35h-3zM580 919h3v35h-3zM584 919h3v35h-3zM588 919h3v35h-3zM592 919h3v35h-3zM596 919h3v35h-3zM600 919h3v35h-3zM604 919h3v35h-3zM608 919h3v35h-3zM612 919h3v35h-3zM616 919h3v35h-3zM620 919h3v35h-3zM624 919h3v35h-3zM628 919h3v33h-3zM632 919h3v29h-3zM636 919h3v26h-3zM640 919h3v23h-3zM644 919h3v22h-3zM648 919h3v21h-3zM652 919h3v19h-3zM656 919h3v18h-3zM660 919h3v17h-3zM664 919h3v15h-3zM668 919h3v13h-3zM672 919h3v12h-3zM676 919h3v10h-3zM680 919h3v10h-3zM684 919h3v11h-3zM688 919h3v12h-3zM692 919h3v14h-3zM696 919h3v15h-3zM700 919h3v16h-3zM704 919h3v17h-3zM708 919h3v18h-3zM712 919h3v20h-3zM716 919h3v22h-3zM720 919h3v23h-3zM724 919h3v24h-3zM728 919h3v25h-3zM732 919h3v25h-3zM736 919h3v25h-3zM740 919h3v25h-3zM744 919h3v24h-3zM748 919h3v24h-3zM752 919h3v23h-3zM756 919h3v22h-3zM760 919h3v20h-3zM764 919h3v18h-3zM768 919h3v16h-3zM772 919h3v13h-3zM776 919h3v12h-3zM780 919h3v11h-3zM784 919h3v10h-3zM788 919h3v9h-3zM792 919h3v7h-3zM796 919h3v6h-3zM800 919h3v5h-3zM804 919h3v4h-3zM808 919h3v3h-3zM812 919h3v3h-3zM816 919h3v2h-3zM820 919h3v2h-3zM824 919h3v2h-3zM828 919h3v2h-3zM832 919h3v3h-3zM836 919h3v5h-3zM840 919h3v4h-3zM844 919h3v4h-3zM848 919h3v3h-3zM852 919h3v3h-3zM856 919h3v2h-3zM860 919h3v1h-3zM864 918h3v1h-3zM868 916h3v3h-3zM872 916h3v3h-3zM876 915h3v4h-3zM880 916h3v3h-3zM884 916h3v3h-3zM888 916h3v3h-3zM892 916h3v3h-3zM896 914h3v5h-3zM900 912h3v7h-3zM904 911h3v8h-3zM908 910h3v9h-3zM912 909h3v10h-3zM916 908h3v11h-3zM920 908h3v11h-3zM924 911h3v8h-3zM928 915h3v4h-3zM932 919h3v1h-3zM936 919h3v5h-3zM940 919h3v12h-3zM944 919h3v17h-3zM948 919h3v20h-3zM952 919h3v23h-3zM956 919h3v24h-3zM960 919h3v26h-3zM964 919h3v24h-3zM968 919h3v22h-3zM972 919h3v21h-3zM976 919h3v23h-3zM980 919h3v24h-3zM984 919h3v25h-3zM988 919h3v26h-3zM992 919h3v26h-3zM996 919h3v23h-3zM1000 919h3v20h-3zM1004 919h3v16h-3zM1008 919h3v11h-3zM1012 919h3v4h-3zM1016 916h3v3h-3zM1020 908h3v11h-3zM1024 901h3v18h-3zM1028 893h3v26h-3zM1032 887h3v32h-3zM1036 885h3v34h-3zM1040 885h3v34h-3zM1044 885h3v34h-3zM1048 885h3v34h-3zM1052 885h3v34h-3zM1056 885h3v34h-3zM1060 885h3v34h-3zM1064 885h3v34h-3zM1068 885h3v34h-3zM1072 885h3v34h-3zM1076 885h3v34h-3zM1080 885h3v34h-3zM1084 885h3v34h-3zM1088 885h3v34h-3zM1092 885h3v34h-3zM1096 885h3v34h-3zM1100 885h3v34h-3zM1104 885h3v34h-3zM1108 885h3v34h-3zM1112 885h3v34h-3zM1116 885h3v34h-3zM1120 885h3v34h-3zM1124 885h3v34h-3zM1128 886h3v33h-3zM1132 889h3v30h-3zM1136 891h3v28h-3zM1140 893h3v26h-3zM1144 894h3v25h-3zM1148 897h3v22h-3zM1152 899h3v20h-3zM1156 900h3v19h-3zM1160 901h3v18h-3zM1164 900h3v19h-3zM1168 902h3v17h-3zM1172 902h3v17h-3zM1176 903h3v16h-3zM1180 904h3v15h-3zM1184 904h3v15h-3zM1188 905h3v14h-3zM1192 904h3v15h-3zM1196 902h3v17h-3zM1200 900h3v19h-3zM1204 897h3v22h-3zM1208 894h3v25h-3zM1212 892h3v27h-3zM1216 890h3v29h-3zM1220 888h3v31h-3zM1224 886h3v33h-3zM1228 885h3v34h-3zM1232 885h3v34h-3zM1236 885h3v34h-3zM1240 885h3v34h-3zM1244 885h3v34h-3zM1248 885h3v34h-3zM1252 885h3v34h-3zM1256 885h3v34h-3zM1260 885h3v34h-3zM1264 885h3v34h-3zM1268 885h3v34h-3zM1272 885h3v34h-3zM1276 885h3v34h-3zM1280 885h3v34h-3zM1284 885h3v34h-3zM1288 885h3v34h-3zM1292 885h3v34h-3zM1296 885h3v34h-3zM1300 885h3v34h-3zM1304 885h3v34h-3zM1308 885h3v34h-3zM1312 885h3v34h-3zM1316 885h3v34h-3zM1320 885h3v34h-3zM1324 885h3v34h-3zM1328 885h3v34h-3zM1332 885h3v34h-3zM1336 885h3v34h-3zM1340 885h3v34h-3zM1344 885h3v34h-3zM1348 885h3v34h-3zM1352 885h3v34h-3zM1356 885h3v34h-3zM1360 885h3v34h-3zM1364 885h3v34h-3zM1368 885h3v34h-3zM1372 885h3v34h-3zM1376 885h3v34h-3zM1380 885h3v34h-3zM1384 885h3v34h-3zM1388 885h3v34h-3zM1392 885h3v34h-3zM1396 888h3v31h-3zM1400 895h3v24h-3zM1404 898h3v21h-3zM1408 902h3v17h-3zM1412 906h3v13h-3zM1416 910h3v9h-3zM1420 912h3v7h-3zM1424 913h3v6h-3zM1428 914h3v5h-3zM1432 913h3v6h-3zM1436 913h3v6h-3zM1440 912h3v7h-3zM1444 911h3v8h-3zM1448 911h3v8h-3zM1452 911h3v8h-3zM1456 910h3v9h-3zM1460 910h3v9h-3zM1464 910h3v9h-3zM1468 909h3v10h-3zM1472 907h3v12h-3zM1476 905h3v14h-3zM1480 902h3v17h-3zM1484 896h3v23h-3zM1488 893h3v26h-3zM1492 890h3v29h-3zM1496 887h3v32h-3zM1500 885h3v34h-3zM1504 885h3v34h-3zM1508 885h3v34h-3zM1512 885h3v34h-3zM1516 887h3v32h-3zM1520 889h3v30h-3zM1524 890h3v29h-3zM1528 893h3v26h-3zM1532 895h3v24h-3zM1536 895h3v24h-3zM1540 893h3v26h-3zM1544 890h3v29h-3zM1548 889h3v30h-3zM1552 888h3v31h-3zM1556 886h3v33h-3zM1560 886h3v33h-3zM1564 886h3v33h-3zM1568 890h3v29h-3zM1572 893h3v26h-3zM1576 896h3v23h-3zM1580 898h3v21h-3zM1584 901h3v18h-3zM1588 904h3v15h-3zM1592 906h3v13h-3zM1596 907h3v12h-3zM1600 907h3v12h-3zM1604 907h3v12h-3zM1608 907h3v12h-3z"/><path fill="#00ff00" d="M5 818h2v67h-2zM8 824h3v61h-3zM12 832h3v53h-3zM16 841h3v44h-3zM20 850h3v35h-3zM24 857h3v28h-3zM28 864h3v21h-3zM32 870h3v15h-3zM36 877h3v8h-3zM40 883h3v2h-3zM128 883h3v2h-3zM132 880h3v5h-3zM136 877h3v8h-3zM140 875h3v10h-3zM144 873h3v12h-3zM148 874h3v11h-3zM152 875h3v10h-3zM156 878h3v7h-3zM160 881h3v4h-3zM1036 879h3v6h-3zM1040 873h3v12h-3zM1044 869h3v16h-3zM1048 867h3v18h-3zM1052 866h3v19h-3zM1056 865h3v20h-3zM1060 861h3v24h-3zM1064 856h3v29h-3zM1068 854h3v31h-3zM1072 853h3v32h-3zM1076 852h3v33h-3zM1080 853h3v32h-3zM1084 853h3v32h-3zM1088 853h3v32h-3zM1092 853h3v32h-3zM1096 854h3v31h-3zM1100 854h3v31h-3zM1104 856h3v29h-3zM1108 859h3v26h-3zM1112 863h3v22h-3zM1116 869h3v16h-3zM1120 876h3v9h-3zM1124 881h3v4h-3zM1228 884h3v1h-3zM1232 882h3v3h-3zM1236 879h3v6h-3zM1240 878h3v7h-3zM1244 877h3v8h-3zM1248 876h3v9h-3zM1252 876h3v9h-3zM1256 876h3v9h-3zM1260 879h3v6h-3zM1264 881h3v4h-3zM1268 882h3v3h-3zM1272 881h3v4h-3zM1276 880h3v5h-3zM1280 880h3v5h-3zM1284 880h3v5h-3zM1288 879h3v6h-3zM1292 877h3v8h-3zM1296 876h3v9h-3zM1300 873h3v12h-3zM1304 870h3v15h-3zM1308 868h3v17h-3zM1312 867h3v18h-3zM1316 867h3v18h-3zM1320 866h3v19h-3zM1324 864h3v21h-3zM1328 863h3v22h-3zM1332 862h3v23h-3zM1336 860h3v25h-3zM1340 858h3v27h-3zM1344 855h3v30h-3zM1348 853h3v32h-3zM1352 852h3v33h-3zM1356 852h3v33h-3zM1360 853h3v32h-3zM1364 853h3v32h-3zM1368 854h3v31h-3zM1372 856h3v29h-3zM1376 861h3v24h-3zM1380 867h3v18h-3zM1384 871h3v14h-3zM1388 875h3v10h-3zM1392 882h3v3h-3zM1504 884h3v1h-3zM1508 884h3v1h-3z"/><path fill="#ff0000" d="M208 954h3v2h-3zM212 954h3v8h-3zM216 954h3v14h-3zM220 954h3v18h-3zM224 954h3v21h-3zM228 954h3v21h-3zM232 954h3v20h-3zM236 954h3v20h-3zM240 954h3v19h-3zM244 954h3v17h-3zM248 954h3v17h-3zM252 954h3v17h-3zM256 954h3v16h-3zM260 954h3v14h-3zM264 954h3v12h-3zM268 954h3v10h-3zM272 954h3v7h-3zM276 954h3v5h-3zM280 954h3v2h-3zM548 954h3v3h-3zM552 954h3v6h-3zM556 954h3v10h-3zM560 954h3v14h-3zM564 954h3v16h-3zM568 954h3v19h-3zM572 954h3v20h-3zM576 954h3v22h-3zM580 954h3v23h-3zM584 954h3v24h-3zM588 954h3v25h-3zM592 954h3v24h-3zM596 954h3v23h-3zM600 954h3v21h-3zM604 954h3v18h-3zM608 954h3v16h-3zM612 954h3v13h-3zM616 954h3v10h-3zM620 954h3v6h-3zM624 954h3v2h-3z"/><rect x="5" y="910" width="1869" height="1" fill="#ffd700"/><rect x="5" y="928" width="1869" height="1" fill="#ffd700"/><path d="M5 981.500l5.500 5.500h-5.500z" fill="#00ffff" shape-rendering="auto"/><rect x="5" y="988" width="1" height="3" fill="#fff"/><rect x="69" y="988" width="1" height="3" fill="#fff"/><rect x="133" y="988" width="1" height="3" fill="#fff"/><rect x="197" y="988" width="1" height="3" fill="#fff"/><rect x="261" y="988" width="1" height="3" fill="#fff"/><rect x="325" y="988" width="1" height="3" fill="#fff"/><rect x="389" y="988" width="1" height="3" fill="#fff"/><rect x="453" y="988" width="1" height="3" fill="#fff"/><rect x="517" y="988" width="1" height="3" fill="#fff"/><rect x="581" y="988" width="1" height="3" fill="#fff"/><rect x="645" y="988" width="1" height="3" fill="#fff"/><rect x="709" y="988" width="1" height="3" fill="#fff"/><rect x="773" y="988" width="1" height="3" fill="#fff"/><rect x="837" y="988" width="1" height="3" fill="#fff"/><rect x="901" y="988" width="1" height="3" fill="#fff"/><rect x="965" y="988" width="1" height="3" fill="#fff"/><rect x="1029" y="988" width="1" height="3" fill="#fff"/><rect x="1093" y="988" width="1" height="3" fill="#fff"/><rect x="1157" y="988" width="1" height="3" fill="#fff"/><rect x="1221" y="988" width="1" height="3" fill="#fff"/><rect x="1285" y="988" width="1" height="3" fill="#fff"/><rect x="1349" y="988" width="1" height="3" fill="#fff"/><rect x="1413" y="988" width="1" height="3" fill="#fff"/><rect x="1477" y="988" width="1" height="3" fill="#fff"/><rect x="1541" y="988" width="1" height="3" fill="#fff"/><rect x="1605" y="988" width="1" height="3" fill="#fff"/></svg>
<div class="a" style="left:1874px;top:905px;width:15px;height:11px;background:#ffd700"></div>
<div class="t" style="left:1876px;top:906px;font-size:10px;color:#fff;letter-spacing:-0.6px;color:#000">0.2</div>
<div class="a" style="left:1874px;top:923px;width:18px;height:11px;background:#ffd700"></div>
<div class="t" style="left:1876px;top:924px;font-size:10px;color:#fff;letter-spacing:-0.6px;color:#000">-0.2</div>
<div class="a" style="left:1873px;top:919px;width:2px;height:1px;background:#fff"></div>
<div class="t" style="left:1876px;top:916px;font-size:10px;color:#fff;letter-spacing:-0.6px">0.00</div>
<div class="t" style="left:4px;top:992px;font-size:10px;color:#fff;letter-spacing:-0.35px">16 Sep 2022</div>
<div class="t" style="left:68px;top:992px;font-size:10px;color:#fff;letter-spacing:-0.35px">16 Sep 06:40</div>
<div class="t" style="left:132px;top:992px;font-size:10px;color:#fff;letter-spacing:-0.35px">16 Sep 08:00</div>
<div class="t" style="left:196px;top:992px;font-size:10px;color:#fff;letter-spacing:-0.35px">16 Sep 09:20</div>
<div class="t" style="left:260px;top:992px;font-size:10px;color:#fff;letter-spacing:-0.35px">16 Sep 10:40</div>
<div class="t" style="left:324px;top:992px;font-size:10px;color:#fff;letter-spacing:-0.35px">16 Sep 12:00</div>
<div class="t" style="left:388px;top:992px;font-size:10px;color:#fff;letter-spacing:-0.35px">16 Sep 13:20</div>
<div class="t" style="left:452px;top:992px;font-size:10px;color:#fff;letter-spacing:-0.35px">16 Sep 14:40</div>
<div class="t" style="left:516px;top:992px;font-size:10px;color:#fff;letter-spacing:-0.35px">16 Sep 16:00</div>
<div class="t" style="left:580px;top:992px;font-size:10px;color:#fff;letter-spacing:-0.35px">16 Sep 17:20</div>
<div class="t" style="left:644px;top:992px;font-size:10px;color:#fff;letter-spacing:-0.35px">16 Sep 18:40</div>
<div class="t" style="left:708px;top:992px;font-size:10px;color:#fff;letter-spacing:-0.35px">16 Sep 20:00</div>
<div class="t" style="left:772px;top:992px;font-size:10px;color:#fff;letter-spacing:-0.35px">16 Sep 21:20</div>
<div class="t" style="left:836px;top:992px;font-size:10px;color:#fff;letter-spacing:-0.35px">16 Sep 22:40</div>
<div class="t" style="left:900px;top:992px;font-size:10px;color:#fff;letter-spacing:-0.35px">19 Sep 00:10</div>
<div class="t" style="left:964px;top:992px;font-size:10px;color:#fff;letter-spacing:-0.35px">19 Sep 01:55</div>
<div class="t" style="left:1028px;top:992px;font-size:10px;color:#fff;letter-spacing:-0.35px">19 Sep 03:15</div>
<div class="t" style="left:1092px;top:992px;font-size:10px;color:#fff;letter-spacing:-0.35px">19 Sep 04:35</div>
<div class="t" style="left:1156px;top:992px;font-size:10px;color:#fff;letter-spacing:-0.35px">19 Sep 05:55</div>
<div class="t" style="left:1220px;top:992px;font-size:10px;color:#fff;letter-spacing:-0.35px">19 Sep 07:15</div>
<div class="t" style="left:1284px;top:992px;font-size:10px;color:#fff;letter-spacing:-0.35px">19 Sep 08:35</div>
<div class="t" style="left:1348px;top:992px;font-size:10px;color:#fff;letter-spacing:-0.35px">19 Sep 09:55</div>
<div class="t" style="left:1412px;top:992px;font-size:10px;color:#fff;letter-spacing:-0.35px">19 Sep 11:15</div>
<div class="t" style="left:1476px;top:992px;font-size:10px;color:#fff;letter-spacing:-0.35px">19 Sep 12:35</div>
<div class="t" style="left:1540px;top:992px;font-size:10px;color:#fff;letter-spacing:-0.35px">19 Sep 13:55</div>
<div class="t" style="left:1604px;top:992px;font-size:10px;color:#fff;letter-spacing:-0.35px">19 Sep 15:15</div>
<svg style="left:8px;top:108px" width="8" height="5"><path d="M0 0h7l-3.500 4.300z" fill="#fff"/></svg>
<div class="t" style="left:20px;top:105px;font-size:10px;color:#fff;letter-spacing:-0.35px">USDJPY,M5</div>
<div class="t" style="left:9px;top:814px;font-size:10px;color:#fff;letter-spacing:-0.23px">CSSDiff - v1.0.0 0.0000 0.0000 0.2824</div>
<div class="t" style="left:1768px;top:106px;font-size:10px;color:#fff;letter-spacing:-0.2px">Trade Assistant MT4</div>
<svg style="left:1856px;top:105px" width="12" height="12"><circle cx="6" cy="6" r="5.400" fill="none" stroke="#fff" stroke-width="1"/><circle cx="4.100" cy="4.600" r="0.800" fill="#fff"/><circle cx="7.900" cy="4.600" r="0.800" fill="#fff"/><path d="M3.300 9a3.200 3.200 0 0 1 5.400 0" stroke="#fff" fill="none" stroke-width="1"/></svg>
<div class="t" style="left:1641px;top:305px;font-size:20.5px;color:#00e0e8;letter-spacing:1.75px;-webkit-text-stroke:0.35px #00e0e8">&lt;--01:33</div>
<div class="t" style="left:1672px;top:823px;font-size:9px;color:#ffff00;font-family:'Liberation Mono',monospace;letter-spacing:-0.5px">current</div>
<div class="t" style="left:1672px;top:831px;font-size:16px;color:#ffff00;font-family:'Liberation Mono',monospace;letter-spacing:0.8px">USDJPY 0.28</div>
<svg style="left:921px;top:791px" width="30" height="17"><rect x="0" y="0" width="1" height="17" fill="#c0c0c0"/><path d="M0.500 0.500h24l4 6-4 6h-24z" fill="#c0c0c0" stroke="#f4f4f4" stroke-width="1"/></svg><div class="t" style="left:923px;top:794px;font-size:9px;color:#000;letter-spacing:0px">00:38</div>
<svg style="left:913px;top:791px" width="30" height="17"><rect x="0" y="0" width="1" height="17" fill="#c0c0c0"/><path d="M0.500 0.500h24l4 6-4 6h-24z" fill="#c0c0c0" stroke="#f4f4f4" stroke-width="1"/></svg><div class="t" style="left:915px;top:794px;font-size:9px;color:#000;letter-spacing:0px">00:30</div>
<svg style="left:969px;top:791px" width="30" height="17"><rect x="0" y="0" width="1" height="17" fill="#c0c0c0"/><path d="M0.500 0.500h24l4 6-4 6h-24z" fill="#c0c0c0" stroke="#f4f4f4" stroke-width="1"/></svg><div class="t" style="left:971px;top:794px;font-size:9px;color:#000;letter-spacing:0px">02:00</div>
<svg style="left:1113px;top:791px" width="30" height="17"><rect x="0" y="0" width="1" height="17" fill="#c0c0c0"/><path d="M0.500 0.500h24l4 6-4 6h-24z" fill="#c0c0c0" stroke="#f4f4f4" stroke-width="1"/></svg><div class="t" style="left:1115px;top:794px;font-size:9px;color:#000;letter-spacing:0px">05:00</div>
<svg style="left:1305px;top:791px" width="30" height="17"><rect x="0" y="0" width="1" height="17" fill="#c0c0c0"/><path d="M0.500 0.500h24l4 6-4 6h-24z" fill="#c0c0c0" stroke="#f4f4f4" stroke-width="1"/></svg><div class="t" style="left:1307px;top:794px;font-size:9px;color:#000;letter-spacing:0px">09:02</div>
<svg style="left:1353px;top:791px" width="30" height="17"><rect x="0" y="0" width="1" height="17" fill="#c0c0c0"/><path d="M0.500 0.500h24l4 6-4 6h-24z" fill="#c0c0c0" stroke="#f4f4f4" stroke-width="1"/></svg><div class="t" style="left:1355px;top:794px;font-size:9px;color:#000;letter-spacing:0px">10:00</div>
<svg style="left:1401px;top:791px" width="30" height="17"><rect x="0" y="0" width="1" height="17" fill="#c0c0c0"/><path d="M0.500 0.500h24l4 6-4 6h-24z" fill="#c0c0c0" stroke="#f4f4f4" stroke-width="1"/></svg><div class="t" style="left:1403px;top:794px;font-size:9px;color:#000;letter-spacing:0px">11:00</div>
<svg style="left:1497px;top:791px" width="30" height="17"><rect x="0" y="0" width="1" height="17" fill="#c0c0c0"/><path d="M0.500 0.500h24l4 6-4 6h-24z" fill="#c0c0c0" stroke="#f4f4f4" stroke-width="1"/></svg><div class="t" style="left:1499px;top:794px;font-size:9px;color:#000;letter-spacing:0px">13:03</div>
<svg style="left:1617px;top:791px" width="30" height="17"><rect x="0" y="0" width="1" height="17" fill="#1e90ff"/><path d="M0.500 0.500h24l4 6-4 6h-24z" fill="#1e90ff" stroke="#f4f4f4" stroke-width="1"/></svg><div class="t" style="left:1619px;top:794px;font-size:9px;color:#000;letter-spacing:0px">15:30</div>
<svg style="left:1689px;top:791px" width="30" height="17"><rect x="0" y="0" width="1" height="17" fill="#1e90ff"/><path d="M0.500 0.500h24l4 6-4 6h-24z" fill="#1e90ff" stroke="#f4f4f4" stroke-width="1"/></svg><div class="t" style="left:1691px;top:794px;font-size:9px;color:#000;letter-spacing:0px">17:00</div>
<div class="t" style="left:429px;top:792px;font-size:13px;color:#ffff00;letter-spacing:0.02px">Balance : $ 9230.59</div>
<div class="t" style="left:659px;top:792px;font-size:13px;color:#ffff00;letter-spacing:0.08px">Equity : $ 9230.59</div>
<div class="t" style="left:859px;top:792px;font-size:13px;color:#ffff00;letter-spacing:0.3px">Acc Profit: $ 0.00</div>
<svg style="left:12px;top:679px" width="14" height="14"><circle cx="7" cy="7" r="6.300" fill="#008b8b" stroke="#00ced1"/><path d="M3 4c2-1 3 0 4 1s0 3-2 3-2 3-3 1z" fill="#40e0d0"/><path d="M9 8c2 0 3 1 2 3s-3 1-2-3z" fill="#40e0d0"/></svg>
<div class="t" style="left:30px;top:680px;font-size:13px;color:#00e0e0;letter-spacing:0px">Next 6 Forex News</div>
<div class="t" style="left:165px;top:682px;font-size:11px;color:#00e0e0;letter-spacing:-0.15px">Copyrights DaVinci FX Group</div>
<div class="t" style="left:291px;top:683px;font-size:10px;color:#00e0e0;letter-spacing:-0.2px">Previous</div>
<div class="t" style="left:334px;top:683px;font-size:10px;color:#00e0e0;letter-spacing:-0.2px">Forecast</div>
<div class="t" style="left:14px;top:702px;font-size:12px;color:#1e90ff;letter-spacing:0.1px">00:06:33</div>
<div class="t" style="left:71px;top:702px;font-size:12px;color:#1e90ff;letter-spacing:0.03px">CAD: IPPI m/m</div>
<div class="t" style="left:282px;top:702px;width:50px;text-align:center;font-size:12px;color:#1e90ff;letter-spacing:-0.2px">-2.1%</div>
<div class="t" style="left:326px;top:702px;width:50px;text-align:center;font-size:12px;color:#1e90ff;letter-spacing:-0.2px">-0.9%</div>
<div class="t" style="left:14px;top:719px;font-size:12px;color:#1e90ff;letter-spacing:0.1px">00:06:33</div>
<div class="t" style="left:71px;top:719px;font-size:12px;color:#1e90ff;letter-spacing:0.03px">CAD: RMPI m/m</div>
<div class="t" style="left:282px;top:719px;width:50px;text-align:center;font-size:12px;color:#1e90ff;letter-spacing:-0.2px">-7.4%</div>
<div class="t" style="left:326px;top:719px;width:50px;text-align:center;font-size:12px;color:#1e90ff;letter-spacing:-0.2px">3.2%</div>
<div class="t" style="left:14px;top:736px;font-size:12px;color:#1e90ff;letter-spacing:0.1px">01:36:33</div>
<div class="t" style="left:71px;top:736px;font-size:12px;color:#1e90ff;letter-spacing:0.03px">USD: NAHB Housing Market Index</div>
<div class="t" style="left:282px;top:736px;width:50px;text-align:center;font-size:12px;color:#1e90ff;letter-spacing:-0.2px">49</div>
<div class="t" style="left:326px;top:736px;width:50px;text-align:center;font-size:12px;color:#1e90ff;letter-spacing:-0.2px">47</div>
<div class="t" style="left:14px;top:753px;font-size:12px;color:#1e90ff;letter-spacing:0.1px">11:06:33</div>
<div class="t" style="left:71px;top:753px;font-size:12px;color:#1e90ff;letter-spacing:0.03px">JPY: National Core CPI y/y</div>
<div class="t" style="left:282px;top:753px;width:50px;text-align:center;font-size:12px;color:#1e90ff;letter-spacing:-0.2px">2.4%</div>
<div class="t" style="left:326px;top:753px;width:50px;text-align:center;font-size:12px;color:#1e90ff;letter-spacing:-0.2px">2.7%</div>
<div class="t" style="left:14px;top:770px;font-size:12px;color:#1e90ff;letter-spacing:0.1px">13:06:33</div>
<div class="t" style="left:71px;top:770px;font-size:12px;color:#1e90ff;letter-spacing:0.03px">AUD: Monetary Policy Meeting Minutes</div>
<div class="t" style="left:14px;top:787px;font-size:12px;color:#1e90ff;letter-spacing:0.1px">17:36:33</div>
<div class="t" style="left:71px;top:787px;font-size:12px;color:#1e90ff;letter-spacing:0.03px">CHF: Trade Balance</div>
<div class="t" style="left:282px;top:787px;width:50px;text-align:center;font-size:12px;color:#1e90ff;letter-spacing:-0.2px">3.58B</div>
<div class="a" style="left:20px;top:117px;width:204px;height:265px;background:#0097a7;border:1px solid #8aa0c0"></div>
<div class="a" style="left:21px;top:118px;width:202px;height:16px;background:#00bfff"></div>
<div class="t" style="left:24px;top:121px;font-size:10.5px;color:#15304a;letter-spacing:0.25px">Trade Assistant MT4 9.5</div>
<svg style="left:171px;top:121px" width="11" height="10"><path d="M1 2.500h2l1-1.500h3l1 1.500h2v6.500h-9z" fill="#c4d0ec"/><circle cx="5.500" cy="5.500" r="2" fill="#00bfff"/><circle cx="5.500" cy="5.500" r="0.900" fill="#c4d0ec"/></svg>
<div class="t" style="left:210px;top:121px;font-size:10.5px;color:#15304a;">X</div>
<div class="a" style="left:21px;top:134px;width:202px;height:2px;background:#b4c4e0"></div>
<div class="a" style="left:21px;top:146px;width:202px;height:1px;background:#b4c4e0"></div>
<div class="a" style="left:73px;top:136px;width:2px;height:10px;background:#b4c4e0"></div>
<div class="a" style="left:85px;top:136px;width:2px;height:10px;background:#b4c4e0"></div>
<div class="a" style="left:97px;top:136px;width:2px;height:10px;background:#b4c4e0"></div>
<div class="a" style="left:115px;top:136px;width:2px;height:10px;background:#b4c4e0"></div>
<div class="a" style="left:181px;top:136px;width:2px;height:10px;background:#b4c4e0"></div>
<div class="t" style="left:24px;top:136px;font-size:10.5px;color:#f0f4e8;letter-spacing:-0.2px">USDJPY</div>
<svg style="left:65px;top:139px" width="5" height="4"><path d="M0.500 0.500l2 2 2-2" fill="none" stroke="#8ab0c0"/></svg>
<div class="t" style="left:76px;top:136px;font-size:10.5px;color:#f0f4e8;">&lt;</div>
<div class="t" style="left:88px;top:136px;font-size:10.5px;color:#f0f4e8;">&gt;</div>
<svg style="left:100px;top:137px" width="13" height="9"><path d="M0.500 8.500v-7.500h4l1 1.500h5v1.500M0.500 8.500l2-4.500h10l-2 4.500z" fill="none" stroke="#f0f4e8" stroke-width="0.9"/></svg>
<div class="t" style="left:120px;top:136px;font-size:10.5px;color:#f0f4e8;">OC</div>
<div class="t" style="left:183px;top:136px;font-size:10.5px;color:#f0f4e8;letter-spacing:-0.35px">15:23:27</div>
<div class="a" style="left:23px;top:153px;width:51px;height:15px;background:#3050d0;border:1px solid #2a4858;border-radius:1.5px;font-size:11px;color:#fff;text-align:center;line-height:15px;white-space:nowrap;overflow:hidden;letter-spacing:0px;;padding-right:2px">Trade</div>
<div class="a" style="left:73px;top:153px;width:52px;height:15px;background:#00a8ff;border:1px solid #2a4858;border-radius:1.5px;font-size:11px;color:#fff;text-align:center;line-height:15px;white-space:nowrap;overflow:hidden;letter-spacing:0px;;padding-right:2px">Close</div>
<div class="a" style="left:124px;top:153px;width:52px;height:15px;background:#00a8ff;border:1px solid #2a4858;border-radius:1.5px;font-size:11px;color:#fff;text-align:center;line-height:15px;white-space:nowrap;overflow:hidden;letter-spacing:0px;;padding-right:2px">Settings</div>
<div class="a" style="left:175px;top:153px;width:46px;height:15px;background:#00a8ff;border:1px solid #2a4858;border-radius:1.5px;font-size:11px;color:#fff;text-align:center;line-height:15px;white-space:nowrap;overflow:hidden;letter-spacing:0px;;padding-right:2px">Info</div>
<div class="t" style="left:26px;top:174px;font-size:10.5px;color:#f4faff;">Sp: 6&nbsp; Com: 3.36</div>
<svg style="left:162px;top:173px" width="12" height="9"><path d="M0.500 4.500c2-4.500 9-4.500 11 0c-2 4.500-9 4.500-11 0z" fill="none" stroke="#c4d0ec" stroke-width="1.300"/><circle cx="6" cy="4.500" r="1.600" fill="#c4d0ec"/></svg>
<svg style="left:186px;top:172px" width="10" height="10"><rect x="0.800" y="1.800" width="8.400" height="7.400" rx="1" fill="none" stroke="#c4d0ec" stroke-width="1.300"/><path d="M3 0v2M7 0v2" stroke="#c4d0ec" stroke-width="1.300"/><rect x="5" y="5" width="2.500" height="2.500" fill="#c4d0ec"/></svg>
<svg style="left:207px;top:171px" width="10" height="11"><path d="M5 1a3 3 0 0 1 3 3v3l1.500 1.500h-9l1.500-1.500v-3a3 3 0 0 1 3-3z" fill="none" stroke="#c4d0ec" stroke-width="1.300"/><circle cx="5" cy="5" r="1" fill="#c4d0ec"/><rect x="4" y="9" width="2" height="1.500" fill="#c4d0ec"/></svg>
<div class="a" style="left:22px;top:188px;width:199px;height:1px;background:#b4c4e0"></div>
<div class="a" style="left:26px;top:197px;width:51px;height:5px;border:1px solid #b4c4e0;border-bottom:none;border-radius:2px 2px 0 0"></div>
<div class="a" style="left:42px;top:193px;width:17px;height:8px;background:#3050d0;border-radius:1px;overflow:hidden;color:#fff;font-size:9.500px;line-height:6px;text-align:center">RR</div>
<div class="t" style="left:25px;top:202px;font-size:10.5px;color:#f4faff;letter-spacing:-0.2px">R/TP</div>
<div class="t" style="left:53px;top:202px;font-size:10.5px;color:#f4faff;letter-spacing:-0.2px">R/SL</div>
<div class="t" style="left:97px;top:202px;font-size:10.5px;color:#f4faff;letter-spacing:0.2px">Risk %Ba</div>
<div class="a" style="left:162px;top:196px;width:58px;height:15px;background:#3050d0;border:1px solid #2a4858;border-radius:1.5px;font-size:11px;color:#fff;text-align:center;line-height:15px;white-space:nowrap;overflow:hidden;letter-spacing:0px;;padding-right:2px">Lot calc</div>
<div class="a" style="left:22px;top:213px;width:27px;height:15px;background:#f5f5f5;border:1px solid #607880;border-radius:1.5px;font-size:11px;color:#202020;text-align:center;line-height:15px;white-space:nowrap;overflow:hidden;letter-spacing:0px;text-align:left;padding-left:2px">3.0</div>
<svg style="left:42px;top:216px" width="5" height="9"><path d="M0.500 3l2-2 2 2M0.500 6l2 2 2-2" fill="none" stroke="#a0a0a0" stroke-width="0.8"/></svg>
<div class="a" style="left:53px;top:213px;width:27px;height:15px;background:#f5f5f5;border:1px solid #607880;border-radius:1.5px;font-size:11px;color:#202020;text-align:center;line-height:15px;white-space:nowrap;overflow:hidden;letter-spacing:0px;text-align:left;padding-left:3px">1.0</div>
<svg style="left:73px;top:216px" width="5" height="9"><path d="M0.500 3l2-2 2 2M0.500 6l2 2 2-2" fill="none" stroke="#a0a0a0" stroke-width="0.8"/></svg>
<div class="a" style="left:84px;top:213px;width:11px;height:15px;background:#00a8ff;border:1px solid #2a4858;border-radius:1.5px;font-size:11px;color:#fff;text-align:center;line-height:15px;white-space:nowrap;overflow:hidden;letter-spacing:0px;">-</div>
<div class="a" style="left:94px;top:213px;width:54px;height:15px;background:#f5f5f5;border:1px solid #607880;border-radius:1.5px;font-size:11px;color:#202020;text-align:center;line-height:15px;white-space:nowrap;overflow:hidden;letter-spacing:0px;;padding-right:2px">1.00</div>
<div class="a" style="left:147px;top:213px;width:12px;height:15px;background:#00a8ff;border:1px solid #2a4858;border-radius:1.5px;font-size:10px;color:#fff;text-align:center;line-height:15px;white-space:nowrap;overflow:hidden;letter-spacing:0px;">+</div>
<div class="a" style="left:162px;top:213px;width:59px;height:15px;background:#00a8ff;border:1px solid #2a4858;border-radius:1.5px;font-size:11px;color:#fff;text-align:center;line-height:15px;white-space:nowrap;overflow:hidden;letter-spacing:0px;;padding-right:2px">Lines</div>
<div class="a" style="left:22px;top:233px;width:199px;height:1px;background:#b4c4e0"></div>
<div class="t" style="left:26px;top:241px;font-size:10.5px;color:#f4faff;">Comment</div>
<div class="a" style="left:22px;top:253px;width:199px;height:14px;background:#f5f5f5;border:1px solid #607880;border-radius:1.5px;font-size:10.5px;color:#202020;text-align:center;line-height:14px;white-space:nowrap;overflow:hidden;letter-spacing:0px;;padding-right:2px">Comment</div>
<div class="a" style="left:22px;top:274px;width:75px;height:15px;background:#d8d8d8;border:1px solid #607880;border-radius:1.5px;font-size:11px;color:#202020;text-align:center;line-height:15px;white-space:nowrap;overflow:hidden;letter-spacing:0px;padding-right:4px">1.12</div>
<div class="t" style="left:25px;top:276px;font-size:10.5px;color:#909090;">Lot</div>
<svg style="left:89px;top:277px" width="5" height="9"><path d="M0.500 3l2-2 2 2M0.500 6l2 2 2-2" fill="none" stroke="#a0a0a0" stroke-width="0.8"/></svg>
<div class="t" style="left:107px;top:277px;font-size:10.5px;color:#f4faff;">Entry:</div>
<div class="a" style="left:146px;top:274px;width:75px;height:15px;background:#f5f5f5;border:1px solid #607880;border-radius:1.5px;font-size:11px;color:#202020;text-align:center;line-height:15px;white-space:nowrap;overflow:hidden;letter-spacing:0px;padding-right:4px">200</div>
<svg style="left:213px;top:277px" width="5" height="9"><path d="M0.500 3l2-2 2 2M0.500 6l2 2 2-2" fill="none" stroke="#a0a0a0" stroke-width="0.8"/></svg>
<div class="a" style="left:22px;top:295px;width:75px;height:15px;background:#f5f5f5;border:1px solid #607880;border-radius:1.5px;font-size:11px;color:#202020;text-align:center;line-height:15px;white-space:nowrap;overflow:hidden;letter-spacing:0px;padding-right:4px">600</div>
<div class="t" style="left:25px;top:297px;font-size:10.5px;color:#909090;">tp</div>
<svg style="left:89px;top:298px" width="5" height="9"><path d="M0.500 3l2-2 2 2M0.500 6l2 2 2-2" fill="none" stroke="#a0a0a0" stroke-width="0.8"/></svg>
<div class="a" style="left:101px;top:295px;width:41px;height:15px;background:#00a8ff;border:1px solid #2a4858;border-radius:1.5px;font-size:11px;color:#fff;text-align:center;line-height:15px;white-space:nowrap;overflow:hidden;letter-spacing:0px;;padding-right:2px">Price</div>
<div class="a" style="left:146px;top:295px;width:75px;height:15px;background:#f5f5f5;border:1px solid #607880;border-radius:1.5px;font-size:11px;color:#202020;text-align:center;line-height:15px;white-space:nowrap;overflow:hidden;letter-spacing:0px;padding-right:4px">113</div>
<div class="t" style="left:149px;top:297px;font-size:10.5px;color:#909090;">sl</div>
<svg style="left:213px;top:298px" width="5" height="9"><path d="M0.500 3l2-2 2 2M0.500 6l2 2 2-2" fill="none" stroke="#a0a0a0" stroke-width="0.8"/></svg>
<div class="a" style="left:22px;top:321px;width:88px;height:17px;background:#eb4d5c;border:1px solid #a04050;border-radius:1.5px;font-size:11px;color:#fff;text-align:center;line-height:17px;white-space:nowrap;overflow:hidden;letter-spacing:0px;;padding-right:2px">Sell</div>
<div class="a" style="left:113px;top:321px;width:17px;height:16px;background:#3050d0;border:1px solid #2a4858;border-radius:1.5px;font-size:11px;color:#fff;text-align:center;line-height:16px;white-space:nowrap;overflow:hidden;letter-spacing:0px;"></div>
<div class="a" style="left:133px;top:321px;width:89px;height:17px;background:#009900;border:1px solid #306030;border-radius:1.5px;font-size:11px;color:#fff;text-align:center;line-height:17px;white-space:nowrap;overflow:hidden;letter-spacing:0px;;padding-right:2px">Buy</div>
<div class="a" style="left:23px;top:345px;width:63px;height:15px;background:#00a8ff;border:1px solid #2a4858;border-radius:1.5px;font-size:11px;color:#fff;text-align:center;line-height:15px;white-space:nowrap;overflow:hidden;letter-spacing:0px;;padding-right:2px">Close Sell</div>
<div class="a" style="left:90px;top:345px;width:63px;height:15px;background:#00a8ff;border:1px solid #2a4858;border-radius:1.5px;font-size:11px;color:#fff;text-align:center;line-height:15px;white-space:nowrap;overflow:hidden;letter-spacing:0px;;padding-right:2px">Close All</div>
<div class="a" style="left:157px;top:345px;width:64px;height:15px;background:#00a8ff;border:1px solid #2a4858;border-radius:1.5px;font-size:11px;color:#fff;text-align:center;line-height:15px;white-space:nowrap;overflow:hidden;letter-spacing:0px;;padding-right:2px">Close Buy</div>
<div class="a" style="left:23px;top:363px;width:63px;height:15px;background:#00a8ff;border:1px solid #2a4858;border-radius:1.5px;font-size:11px;color:#fff;text-align:center;line-height:15px;white-space:nowrap;overflow:hidden;letter-spacing:0px;letter-spacing:0.2px;padding-right:2px"><span style="margin-left:-5px">Delete Orders</span></div>
<div class="a" style="left:90px;top:363px;width:63px;height:15px;background:#00a8ff;border:1px solid #2a4858;border-radius:1.5px;font-size:11px;color:#fff;text-align:center;line-height:15px;white-space:nowrap;overflow:hidden;letter-spacing:0px;text-align:left;padding-left:1px">Close %</div>
<div class="a" style="left:135px;top:365px;width:16px;height:12px;background:#f5f5f5;font-size:10.5px;color:#202020;text-align:center;line-height:12px;white-space:nowrap;overflow:hidden;letter-spacing:0px;">50</div>
<div class="a" style="left:157px;top:363px;width:64px;height:15px;background:#00a8ff;border:1px solid #2a4858;border-radius:1.5px;font-size:11px;color:#fff;text-align:center;line-height:15px;white-space:nowrap;overflow:hidden;letter-spacing:0px;;padding-right:2px">Breakeven</div>
<div class="a" style="left:0;top:1008px;width:1920px;height:24px;background:#f0f0f0"></div>
<div class="t" style="left:2px;top:1016px;font-size:12px;color:#000;letter-spacing:-0.42px">For Help, press F1</div>
<div class="a" style="left:1226px;top:1012px;width:1px;height:18px;background:#a0a0a0"></div>
<div class="a" style="left:1342px;top:1012px;width:1px;height:18px;background:#a0a0a0"></div>
<div class="a" style="left:1444px;top:1012px;width:1px;height:18px;background:#a0a0a0"></div>
<div class="a" style="left:1515px;top:1012px;width:1px;height:18px;background:#a0a0a0"></div>
<div class="a" style="left:1586px;top:1012px;width:1px;height:18px;background:#a0a0a0"></div>
<div class="a" style="left:1654px;top:1012px;width:1px;height:18px;background:#a0a0a0"></div>
<div class="a" style="left:1724px;top:1012px;width:1px;height:18px;background:#a0a0a0"></div>
<div class="a" style="left:1790px;top:1012px;width:1px;height:18px;background:#a0a0a0"></div>
<div class="t" style="left:1232px;top:1016px;font-size:12px;color:#000;letter-spacing:-0.3px">Default</div>
<div class="t" style="left:1348px;top:1016px;font-size:12px;color:#000;letter-spacing:-0.3px">2022.09.16 21:30</div>
<div class="t" style="left:1450px;top:1016px;font-size:12px;color:#000;letter-spacing:-0.5px">O: 142.913</div>
<div class="t" style="left:1521px;top:1016px;font-size:12px;color:#000;letter-spacing:-0.5px">H: 142.954</div>
<div class="t" style="left:1592px;top:1016px;font-size:12px;color:#000;letter-spacing:-0.5px">L: 142.913</div>
<div class="t" style="left:1660px;top:1016px;font-size:12px;color:#000;letter-spacing:-0.5px">C: 142.933</div>
<div class="t" style="left:1730px;top:1016px;font-size:12px;color:#000;letter-spacing:-0.3px">V: 254</div>
<div class="t" style="left:1823px;top:1016px;font-size:12px;color:#000;letter-spacing:-0.3px">21127/17 kb</div>
<svg style="left:1796px;top:1014px" width="24" height="14"><rect x="0" y="0" width="2" height="8.0" fill="#6b8e23"/><rect x="0" y="8.0" width="2" height="5.0" fill="#1f5f8f"/><rect x="3" y="0" width="2" height="7.2" fill="#6b8e23"/><rect x="3" y="7.2" width="2" height="5.8" fill="#1f5f8f"/><rect x="6" y="0" width="2" height="6.4" fill="#6b8e23"/><rect x="6" y="6.4" width="2" height="6.6" fill="#1f5f8f"/><rect x="9" y="0" width="2" height="5.6" fill="#6b8e23"/><rect x="9" y="5.6" width="2" height="7.4" fill="#1f5f8f"/><rect x="12" y="0" width="2" height="4.8" fill="#6b8e23"/><rect x="12" y="4.8" width="2" height="8.2" fill="#1f5f8f"/><rect x="15" y="0" width="2" height="4.0" fill="#6b8e23"/><rect x="15" y="4.0" width="2" height="9.0" fill="#1f5f8f"/><rect x="18" y="0" width="2" height="3.2" fill="#6b8e23"/><rect x="18" y="3.2" width="2" height="9.8" fill="#1f5f8f"/><rect x="21" y="0" width="2" height="2.4" fill="#6b8e23"/><rect x="21" y="2.4" width="2" height="10.6" fill="#1f5f8f"/></svg>
<div class="a" style="left:0;top:1032px;width:1920px;height:48px;background:linear-gradient(90deg,#dde5ed 0%,#dfe6ee 25%,#e8e6e8 38%,#f3e4dc 47%,#f3e3da 55%,#efe6e2 65%,#e3e9ee 78%,#dfe7ee 100%)"></div>
<svg style="left:20px;top:1042px" width="26" height="22" viewBox="0 0 26 22"><circle cx="17" cy="8" r="5.500" fill="#f7b500"/><circle cx="21" cy="3.500" r="3" fill="#d93025"/><path d="M5 20.500a4.500 4.500 0 0 1 0-9 6.500 6.500 0 0 1 12 1.500 3.800 3.800 0 0 1 0 7.500z" fill="#f2f5fa" stroke="#c8d4e4" stroke-width="0.6"/></svg>
<div class="t" style="left:51px;top:1043px;font-size:12px;color:#1a1a1a;">65°F</div>
<div class="t" style="left:51px;top:1059px;font-size:12px;color:#5a5a5a;letter-spacing:0.22px">Mostly cloudy</div>
<svg style="left:817px;top:1045px" width="24" height="24"><defs><linearGradient id="wg" x1="0" y1="0" x2="1" y2="1"><stop offset="0" stop-color="#4cc2ff"/><stop offset="1" stop-color="#0067c0"/></linearGradient></defs><rect x="0" y="0" width="11" height="11" fill="url(#wg)"/><rect x="12" y="0" width="11" height="11" fill="url(#wg)"/><rect x="0" y="12" width="11" height="11" fill="url(#wg)"/><rect x="12" y="12" width="11" height="11" fill="url(#wg)"/></svg>
<svg style="left:861px;top:1044px" width="24" height="24"><circle cx="13.500" cy="9.500" r="7" fill="none" stroke="#1a1a1a" stroke-width="2.600"/><path d="M8.500 15l-6 6.500" stroke="#1a1a1a" stroke-width="3" stroke-linecap="round"/></svg>
<svg style="left:905px;top:1045px" width="24" height="24"><rect x="6" y="0" width="17" height="15" rx="1.500" fill="#f4f4f4" stroke="#d0d0d0" stroke-width="0.5"/><rect x="0" y="6" width="18" height="16" rx="1.500" fill="#2a2a2a"/><rect x="6" y="6" width="12" height="9" fill="#a8a8a8"/></svg>
<svg style="left:948px;top:1044px" width="25" height="25"><path d="M12.500 1a11 11 0 1 1-6 20.300l-5.500 1.700 2-5a11 11 0 0 1 9.500-17z" fill="#6b69d6"/><rect x="6" y="8" width="9" height="8" rx="1.500" fill="#fff"/><path d="M15.500 11l3.500-2.500v7l-3.500-2.500z" fill="#fff"/></svg>
<svg style="left:993px;top:1044px" width="24" height="24"><circle cx="12" cy="12" r="11.500" fill="#e0101e"/><ellipse cx="12" cy="12" rx="5" ry="8.800" fill="#f3e3da"/></svg>
<svg style="left:1036px;top:1045px" width="26" height="22"><path d="M1 2a1.500 1.500 0 0 1 1.500-1.500h6l2.500 2.500h12.500a1.500 1.500 0 0 1 1.500 1.500v15.500h-24z" fill="#e8a900"/><rect x="1" y="5" width="24" height="16" rx="1.500" fill="#ffd04a"/><path d="M5 21v-4.500a2 2 0 0 1 2-2h12a2 2 0 0 1 2 2v4.500z" fill="#1a7fd4"/><rect x="9" y="17.500" width="8" height="2" rx="1" fill="#1364b0"/></svg>
<div class="a" style="left:1074px;top:1037px;width:38px;height:38px;background:#fdf4f0;border-radius:4px;box-shadow:0 0 1px #d8c8c0"></div>
<svg style="left:1080px;top:1044px" width="26" height="24"><ellipse cx="11.100" cy="11.800" rx="10.300" ry="11.100" fill="#27b35f"/><ellipse cx="11.500" cy="11.700" rx="4.700" ry="7.750" fill="#fdf4f0"/><rect x="11.400" y="9.400" width="13.500" height="1.500" fill="#27b35f"/><rect x="11.400" y="12.900" width="13.500" height="1.600" fill="#27b35f"/></svg>
<div class="a" style="left:1085px;top:1072px;width:16px;height:3px;background:#1a7a8c;border-radius:1.500px"></div>
<svg style="left:1741px;top:1050px" width="13" height="8"><path d="M1 7l5.500-5.500 5.500 5.500" fill="none" stroke="#1a1a1a" stroke-width="1.300"/></svg>
<svg style="left:1767px;top:1047px" width="18" height="15"><path d="M1 5.500a11.500 11.500 0 0 1 16 0M3.500 8.300a8 8 0 0 1 11 0M6 11a4.500 4.500 0 0 1 6 0" fill="none" stroke="#1a1a1a" stroke-width="1.100"/><circle cx="9" cy="13.200" r="1.200" fill="#1a1a1a"/></svg>
<svg style="left:1791px;top:1048px" width="18" height="14"><path d="M1 5h3l4-3.500v11l-4-3.500h-3z" fill="none" stroke="#1a1a1a" stroke-width="1.100"/><path d="M10.500 4.500a3.500 3.500 0 0 1 0 5M12.500 2.500a6.500 6.500 0 0 1 0 9" fill="none" stroke="#1a1a1a" stroke-width="1"/><path d="M14.500 1a9 9 0 0 1 0 12" fill="none" stroke="#b0b0b0" stroke-width="1"/></svg>
<svg style="left:1815px;top:1048px" width="18" height="14"><rect x="4.500" y="3.500" width="10" height="8" rx="1.500" fill="none" stroke="#1a1a1a" stroke-width="1.100"/><rect x="6" y="5" width="4" height="5" fill="#1a1a1a"/><path d="M15 6v3" stroke="#1a1a1a" stroke-width="1.500"/><path d="M1.500 1v3M4.500 1v3M0.500 4h5v2a2.500 2.500 0 0 1-5 0z" fill="#1a1a1a" stroke="#1a1a1a" stroke-width="0.8"/></svg>
<div class="t" style="left:1820px;top:1042px;width:80px;text-align:right;font-size:12px;color:#1a1a1a">8:23 AM</div>
<div class="t" style="left:1820px;top:1058px;width:80px;text-align:right;font-size:12px;color:#1a1a1a">9/19/2022</div>
</body></html>
